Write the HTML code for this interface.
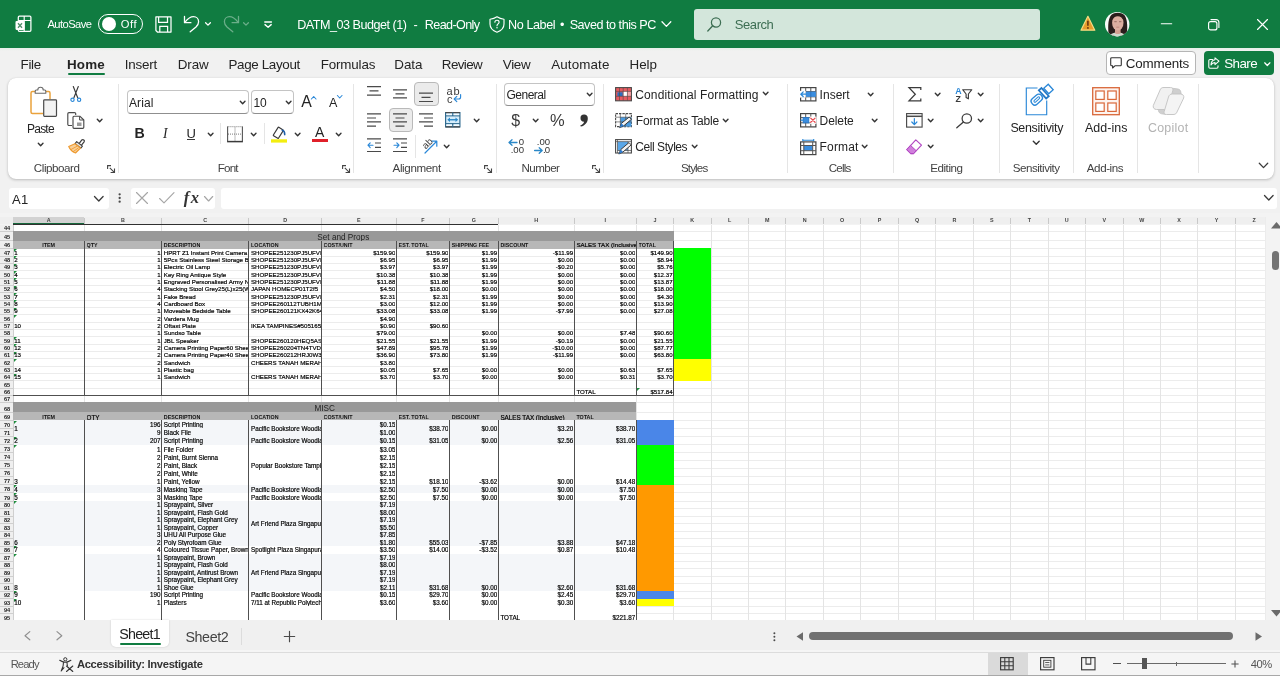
<!DOCTYPE html>
<html lang="en">
<head>
<meta charset="utf-8">
<title>DATM_03 Budget (1) - Excel</title>
<style>
*{box-sizing:border-box;margin:0;padding:0}
html,body{width:1280px;height:676px;overflow:hidden;background:#f1f1f1;font-family:"Liberation Sans",sans-serif;color:#242424}
.abs,.abs *{position:absolute}
.t{position:absolute;white-space:nowrap;line-height:1}
svg{position:absolute;overflow:visible}
.L{position:absolute;left:0;top:0;width:100%;height:100%;will-change:transform}
/* title bar */
#title{left:0;top:0;width:1280px;height:48px;background:#107c41;color:#fff}
#title .t{font-size:12.5px}
/* tab row */
#tabs{left:0;top:48px;width:1280px;height:30px;background:linear-gradient(#e6f0e9 0,#f1f1f1 3px)}
#tabs .t{font-size:14px;top:9px;color:#242424}
/* ribbon */
#ribbon{left:8px;top:78px;width:1265.5px;height:101px}
#rcard{position:absolute;left:0;top:.4px;width:1265.5px;height:100.4px;background:#fff;border-radius:8px;box-shadow:0 1px 3px rgba(0,0,0,.22),0 0 1px rgba(0,0,0,.14)}
#ribbon .t{font-size:13px;color:#242424}
#ribbon .g{font-size:12px;color:#444;top:84px}
.sep{width:1px;background:#e1e1e1;top:6px;height:86px}
/* formula bar */
#fbar{left:0;top:182px;width:1280px;height:31px}
.fbox{background:#fff;border-radius:4px;top:5px;height:22px}
/* grid */
#grid{left:0;top:213px;width:1280px;height:407px;background:#fff;overflow:hidden}
/* bottom */
#sheetbar{left:0;top:620px;width:1280px;height:31px;background:#f0f0f0}
#status{left:0;top:650px;width:1280px;height:26px;background:#f5f5f5}
#status:before{content:'';position:absolute;left:0;top:1.5px;width:1280px;height:1.4px;background:#dcdcdc}

#grid div{position:absolute}
#grid .ch{top:4.1px;height:7px;line-height:7px;font-size:5.4px;text-align:center;color:#444;font-weight:bold}
#grid .rh{left:0;width:12.5px;height:6px;line-height:6px;font-size:5.6px;text-align:right;color:#1a1a1a;padding-right:2.4px;font-weight:bold;letter-spacing:-0.1px}
#grid .c{font-size:6.15px;white-space:nowrap;overflow:hidden;color:#000;-webkit-text-stroke:.18px #000}
#grid .t2 .c{font-size:6.3px}
#grid .h{font-size:5.35px;font-weight:bold;white-space:nowrap;overflow:hidden;color:#111}
#grid .ti{font-size:8.2px;padding-top:1.5px;white-space:nowrap;overflow:hidden;color:#222}
#grid .tri{width:0;height:0;border-top:3px solid #1e8e3e;border-right:3px solid transparent}
</style>
</head>
<body>
<div id="title" class="abs">
<div class="L">
<svg style="left:14.80px;top:14.70px;" width="17" height="17" viewBox="0 0 17 17"><path d="M3.300 6V2.200a1.100 1.100 0 0 1 1.100-1.100h10.400a1.100 1.100 0 0 1 1.100 1.100v13a1.100 1.100 0 0 1-1.100 1.100H4.400a1.100 1.100 0 0 1-1.100-1.100V14.500" fill="none" stroke="#fff" stroke-width="1.250"/><path d="M9.200 1.100v15M3.300 5.500h12.600" stroke="#fff" stroke-width="1.150" fill="none"/><rect x="0.500" y="5.900" width="9" height="9" rx="1.100" fill="#fff"/><path d="M3 8.200l4 4.500M7 8.200l-4 4.500" stroke="#4f8f6a" stroke-width="1.300" fill="none"/></svg>
<div class="t" style="left:47.44px;top:19px;font-size:11.2px;letter-spacing:-0.578px;color:#fff;">AutoSave</div>
<div style="left:98.2px;top:14px;width:45px;height:20px;border:1.3px solid #fff;border-radius:10px"></div>
<div style="left:101.7px;top:17px;width:14.2px;height:14.2px;border-radius:50%;background:#fff"></div>
<div class="t" style="left:120.74px;top:19px;font-size:11.2px;letter-spacing:0.544px;color:#fff;">Off</div>
<svg style="left:154.50px;top:15.80px;" width="17" height="17" viewBox="0 0 17 17"><path d="M0.900 0.900H16V16H2.400L0.900 14.500z" fill="none" stroke="#fff" stroke-width="1.250" stroke-linejoin="round"/><path d="M3.600 0.900V6.300h8.900V0.900M4.800 16v-5.600h7.800V16" fill="none" stroke="#fff" stroke-width="1.250"/></svg>
<svg style="left:183.00px;top:16.00px;" width="17" height="17" viewBox="0 0 17 17"><path d="M1.500 0.500v6.200h6.400" fill="none" stroke="#fff" stroke-width="1.300" stroke-linecap="round" stroke-linejoin="round"/><path d="M1.800 6.300C4.300 3.300 7.200 0.700 10.500 0.700c3 0 5.100 2.100 5.100 5c0 2.300-1.100 3.800-2.600 5.200L7.200 15.800" fill="none" stroke="#fff" stroke-width="1.300" stroke-linecap="round"/></svg>
<svg style="left:204.90px;top:21.90px;" width="6" height="4" viewBox="0 0 6 4"><path d="M0.600 0.700L3 3.100L5.400 0.700" fill="none" stroke="#fff" stroke-width="1.300" stroke-linecap="round" stroke-linejoin="round"/></svg>
<svg style="left:222.50px;top:16.00px;opacity:.38;" width="17" height="17" viewBox="0 0 17 17"><path d="M15.500 0.500v6.200h-6.400" fill="none" stroke="#fff" stroke-width="1.300" stroke-linecap="round" stroke-linejoin="round"/><path d="M15.200 6.300C12.700 3.300 9.800 0.700 6.500 0.700c-3 0-5.100 2.100-5.100 5c0 2.300 1.100 3.800 2.600 5.200L9.800 15.800" fill="none" stroke="#fff" stroke-width="1.300" stroke-linecap="round"/></svg>
<svg style="left:243.00px;top:21.90px;opacity:.38;" width="6" height="4" viewBox="0 0 6 4"><path d="M0.600 0.700L3 3.100L5.400 0.700" fill="none" stroke="#fff" stroke-width="1.300" stroke-linecap="round" stroke-linejoin="round"/></svg>
<svg style="left:264.00px;top:20.80px;" width="9" height="8" viewBox="0 0 9 8"><path d="M0.800 1h6.600" stroke="#fff" stroke-width="1.400" stroke-linecap="round"/><path d="M1 3.600L4.100 6.200L7.200 3.600" fill="none" stroke="#fff" stroke-width="1.400" stroke-linecap="round" stroke-linejoin="round"/></svg>
<div class="t" style="left:297.17px;top:19px;font-size:12.6px;letter-spacing:-0.480px;color:#fff;">DATM_03 Budget (1)</div>
<div class="t" style="left:413.55px;top:19px;font-size:12.6px;color:#fff;">-</div>
<div class="t" style="left:424.87px;top:19px;font-size:12.6px;letter-spacing:-0.621px;color:#fff;">Read-Only</div>
<svg style="left:488.50px;top:16.00px;" width="16" height="17" viewBox="0 0 16 17"><path d="M8 0.800C6 2.200 3.500 3 1 3.200V8c0 4 3 6.800 7 8.200c4-1.400 7-4.200 7-8.200V3.200C12.500 3 10 2.200 8 0.800z" fill="none" stroke="#fff" stroke-width="1.150" stroke-linejoin="round"/><path d="M5.900 6.300c0-1.300 0.900-2 2.100-2s2.100 0.700 2.100 1.900c0 1.700-2.100 1.700-2.100 3.500" fill="none" stroke="#fff" stroke-width="1.100" stroke-linecap="round"/><circle cx="8" cy="11.800" r="0.750" fill="#fff"/></svg>
<div class="t" style="left:507.97px;top:19px;font-size:12.6px;letter-spacing:-0.397px;color:#fff;">No Label</div>
<div class="t" style="left:559.99px;top:19px;font-size:12.6px;color:#fff;">•</div>
<div class="t" style="left:569.67px;top:19px;font-size:12.6px;letter-spacing:-0.473px;color:#fff;">Saved to this PC</div>
<svg style="left:661.00px;top:21.20px;" width="12" height="7" viewBox="0 0 12 7"><path d="M1 0.800L5.400 5.400L9.800 0.800" fill="none" stroke="#fff" stroke-width="1.300" stroke-linecap="round" stroke-linejoin="round"/></svg>
<div style="left:693.6px;top:8.5px;width:346.6px;height:31px;background:#d3e6db;border-radius:3px"></div>
<svg style="left:707.00px;top:16.50px;" width="14.5" height="15" viewBox="0 0 14.5 15"><circle cx="9" cy="5.500" r="4.600" fill="none" stroke="#3d6e53" stroke-width="1.250"/><path d="M5.700 8.800L0.800 14" stroke="#3d6e53" stroke-width="1.300" stroke-linecap="round"/></svg>
<div class="t" style="left:734.75px;top:18px;font-size:13px;letter-spacing:-0.418px;color:#3d6e53;">Search</div>
<svg style="left:1079.50px;top:15.00px;" width="16" height="16.5" viewBox="0 0 16 16.5"><path d="M7.900 1.300L14.800 15.200H1z" fill="#e79d2b" stroke="#f5dc84" stroke-width="1.200" stroke-linejoin="round"/><path d="M7.900 5.800v5" stroke="#6b3410" stroke-width="1.600"/><circle cx="7.900" cy="12.900" r="0.950" fill="#6b3410"/></svg>
<svg style="left:1105.00px;top:11.70px;" width="25" height="25" viewBox="0 0 25 25"><defs><clipPath id="av"><circle cx="12.200" cy="12.200" r="12.200"/></clipPath></defs><circle cx="12.200" cy="12.200" r="12.200" fill="#f6faf7"/><g clip-path="url(#av)"><path d="M3.600 21.500C2.600 13 3.500 6 6.500 2.800C9 0 16.500 0 19 2.800c3 3.200 3.900 10.200 2.900 18.700L17 24H8z" fill="#2a1d1b"/><path d="M4 25c0.800-3 3.800-4.500 8.600-4.500s7.800 1.500 8.600 4.500z" fill="#cfd9cd"/><path d="M10 16h5.600v5.200c-1.800 1.200-3.800 1.200-5.600 0z" fill="#d3a091"/><ellipse cx="12.800" cy="10.800" rx="5.700" ry="7.800" fill="#dcaea0"/><path d="M7 8.300C7.300 4.600 9.500 2.600 12.800 2.600s5.500 2 5.800 5.700C17 5.700 15.500 4.300 12.800 4.300S8.600 5.700 7 8.300z" fill="#2a1d1b"/><path d="M9.300 9.700h2.400M14 9.700h2.400" stroke="#7a5248" stroke-width="0.700"/><path d="M11.300 15.200h3" stroke="#b87a70" stroke-width="0.700"/></g></svg>
<svg style="left:1160.50px;top:22.80px;" width="11" height="2" viewBox="0 0 11 2"><path d="M0.300 0.700h10.400" stroke="#fff" stroke-width="1.150" stroke-linecap="round"/></svg>
<svg style="left:1208.00px;top:18.50px;" width="12" height="12" viewBox="0 0 12 12"><rect x="0.600" y="2.600" width="8.300" height="8.300" rx="2" fill="none" stroke="#fff" stroke-width="1.150"/><path d="M3 0.600h5.200a2.700 2.700 0 0 1 2.700 2.700v5.200" fill="none" stroke="#fff" stroke-width="1.150" stroke-linecap="round"/></svg>
<svg style="left:1256.50px;top:18.80px;" width="11" height="11" viewBox="0 0 11 11"><path d="M0.500 0.500l10 10M10.500 0.500l-10 10" stroke="#fff" stroke-width="1.150" stroke-linecap="round"/></svg>
</div>
</div>
<div id="tabs" class="abs">
<div class="L">
<div class="t" style="left:20.53px;top:10px;font-size:13.4px;letter-spacing:-0.284px;">File</div>
<div class="t" style="left:67.03px;top:10px;font-size:13.4px;letter-spacing:0.170px;font-weight:bold;">Home</div>
<div class="t" style="left:124.73px;top:10px;font-size:13.4px;letter-spacing:-0.175px;">Insert</div>
<div class="t" style="left:177.83px;top:10px;font-size:13.4px;letter-spacing:-0.143px;">Draw</div>
<div class="t" style="left:228.53px;top:10px;font-size:13.4px;letter-spacing:-0.351px;">Page Layout</div>
<div class="t" style="left:320.73px;top:10px;font-size:13.4px;letter-spacing:-0.158px;">Formulas</div>
<div class="t" style="left:394.33px;top:10px;font-size:13.4px;letter-spacing:-0.088px;">Data</div>
<div class="t" style="left:441.83px;top:10px;font-size:13.4px;letter-spacing:-0.619px;">Review</div>
<div class="t" style="left:502.73px;top:10px;font-size:13.4px;letter-spacing:-0.255px;">View</div>
<div class="t" style="left:551.13px;top:10px;font-size:13.4px;letter-spacing:0.140px;">Automate</div>
<div class="t" style="left:629.53px;top:10px;font-size:13.4px;letter-spacing:-0.040px;">Help</div>
<div style="left:67.70px;top:25.10px;width:37.70px;height:1.90px;background:#107c41;border-radius:1px"></div>
<div style="left:1105.60px;top:3.20px;width:90.10px;height:23.40px;background:#fff;border:1px solid #b5b5b5;border-radius:4px"></div>
<svg style="left:1110.00px;top:9.30px;" width="12" height="12" viewBox="0 0 12 12"><path d="M1.700 0.700h8.600a1 1 0 0 1 1 1v6a1 1 0 0 1-1 1H5.200L2.600 11V8.700H1.700a1 1 0 0 1-1-1v-6a1 1 0 0 1 1-1z" fill="none" stroke="#333" stroke-width="1.100" stroke-linejoin="round"/></svg>
<div class="t" style="left:1125.73px;top:9px;font-size:13.4px;letter-spacing:-0.163px;">Comments</div>
<div style="left:1203.50px;top:3.20px;width:70.70px;height:23.80px;background:#107c41;border-radius:4px"></div>
<svg style="left:1208.00px;top:9.00px;" width="12" height="12" viewBox="0 0 12 12"><path d="M4.500 2.500H2a1.200 1.200 0 0 0-1.200 1.200V10a1.200 1.200 0 0 0 1.200 1.200h6.800A1.200 1.200 0 0 0 10 10V8.800" fill="none" stroke="#fff" stroke-width="1.100" stroke-linecap="round"/><path d="M7 0.800L11 4.200L7 7.600V5.600C5 5.600 3.800 6.300 3 8c0-3 1.500-4.800 4-5.200z" fill="none" stroke="#fff" stroke-width="1.050" stroke-linejoin="round"/></svg>
<div class="t" style="left:1224.13px;top:9px;font-size:13.4px;letter-spacing:-0.555px;color:#fff;">Share</div>
<svg style="left:1263.50px;top:13.50px;" width="7" height="5" viewBox="0 0 7 5"><path d="M0.700 0.800L3.300 3.500L5.900 0.800" fill="none" stroke="#fff" stroke-width="1.250" stroke-linecap="round" stroke-linejoin="round"/></svg>
</div>
</div>
<div id="ribbon" class="abs"><div id="rcard"></div>
<div class="L">
<svg style="left:22.00px;top:8.00px;" width="28" height="32" viewBox="0 0 28 32"><path d="M6.500 5.500H2.500a1.500 1.500 0 0 0-1.500 1.500V26a1.500 1.500 0 0 0 1.500 1.500H13" fill="none" stroke="#eaa23c" stroke-width="1.500"/><path d="M15 5.500h3.500A1.500 1.500 0 0 1 20 7v6" fill="none" stroke="#eaa23c" stroke-width="1.500"/><path d="M5.200 7.200V5a1 1 0 0 1 1-1h1.600a2.700 2.700 0 0 1 5.400 0h1.600a1 1 0 0 1 1 1v2.200z" fill="#fff" stroke="#6a6a6a" stroke-width="1.100" stroke-linejoin="round"/><rect x="13.700" y="13.800" width="12.800" height="16.600" rx="0.800" fill="#f3f3f3" stroke="#4a4a4a" stroke-width="1.200"/></svg>
<div class="t" style="left:19.00px;top:45px;font-size:12px;letter-spacing:-0.772px;">Paste</div>
<svg style="left:29.95px;top:64.75px;" width="5.3" height="3.1" viewBox="0 0 5.3 3.1"><path d="M0.300 0.300L2.65 2.70L5.00 0.300" fill="none" stroke="#333" stroke-width="1.4" stroke-linecap="round" stroke-linejoin="round"/></svg>
<svg style="left:62.00px;top:8.00px;" width="12" height="16.5" viewBox="0 0 12 16.5"><path d="M3.300 0.500L7.700 11.700M8.300 0.500L3.900 11.700" stroke="#3b3b3b" stroke-width="1.150" stroke-linecap="round" fill="none"/><circle cx="2.500" cy="13.800" r="1.650" fill="#fff" stroke="#2b88d8" stroke-width="1.150"/><circle cx="9.100" cy="13.800" r="1.650" fill="#fff" stroke="#2b88d8" stroke-width="1.150"/></svg>
<svg style="left:59.00px;top:34.00px;" width="18" height="17" viewBox="0 0 18 17"><path d="M5 13.500H2a1.200 1.200 0 0 1-1.200-1.200V1.800A1.200 1.200 0 0 1 2 0.600h5.500a1.200 1.200 0 0 1 1.200 1.200V3" fill="none" stroke="#4a4a4a" stroke-width="1.150"/><path d="M7 4.200h5.800L16.800 8v7.300a1 1 0 0 1-1 1H7a1 1 0 0 1-1-1V5.200a1 1 0 0 1 1-1z" fill="#fff" stroke="#4a4a4a" stroke-width="1.150" stroke-linejoin="round"/><path d="M12.600 4.400V8h4" fill="none" stroke="#4a4a4a" stroke-width="1"/><rect x="10" y="10.500" width="4.500" height="3.500" fill="#9a9a9a"/></svg>
<svg style="left:88.75px;top:41.15px;" width="5.3" height="3.1" viewBox="0 0 5.3 3.1"><path d="M0.300 0.300L2.65 2.70L5.00 0.300" fill="none" stroke="#333" stroke-width="1.4" stroke-linecap="round" stroke-linejoin="round"/></svg>
<svg style="left:59.50px;top:60.00px;" width="17" height="16" viewBox="0 0 17 16"><path d="M11.300 5.300l2.500-3.300a1.500 1.500 0 0 1 2.300 1.900l-2.600 3.200" fill="#fff" stroke="#3b3b3b" stroke-width="1.200"/><path d="M8.700 3.600l5.700 4.500-1.600 2-5.700-4.500z" fill="#e8e8e8" stroke="#3b3b3b" stroke-width="1.100" stroke-linejoin="round"/><path d="M7 5.800L0.700 8.500c1.300 3 3.600 5.300 6.800 6.500L12.500 10z" fill="#f8cf98" stroke="#ee9a2f" stroke-width="1.100" stroke-linejoin="round"/><path d="M3 11.500L9.500 8M5 13.800l5.500-4" stroke="#ee9a2f" stroke-width="0.900" fill="none"/></svg>
<div class="t" style="left:25.82px;top:84px;font-size:11.6px;letter-spacing:-0.437px;color:#424242;">Clipboard</div>
<svg style="left:99.00px;top:87.00px;" width="8.5" height="8" viewBox="0 0 8.5 8"><path d="M0.600 4V0.600H4" fill="none" stroke="#444" stroke-width="1.100"/><path d="M2.800 2.800L7.300 7.300M7.500 3.600V7.500H3.600" fill="none" stroke="#444" stroke-width="1.100"/></svg>
<div style="left:110.10px;top:6.00px;width:1.00px;height:88.50px;background:#e5e5e5"></div>
<div style="left:119.00px;top:12.00px;width:121.70px;height:24.40px;background:#fff;border:1px solid #c4c4c4;border-bottom-color:#8f8f8f;border-radius:4px"></div>
<div class="t" style="left:121.00px;top:19px;font-size:12px;letter-spacing:0.073px;">Arial</div>
<svg style="left:232.05px;top:23.35px;" width="5.3" height="3.1" viewBox="0 0 5.3 3.1"><path d="M0.300 0.300L2.65 2.70L5.00 0.300" fill="none" stroke="#333" stroke-width="1.4" stroke-linecap="round" stroke-linejoin="round"/></svg>
<div style="left:242.60px;top:12.00px;width:43.10px;height:24.40px;background:#fff;border:1px solid #c4c4c4;border-bottom-color:#8f8f8f;border-radius:4px"></div>
<div class="t" style="left:245.40px;top:19px;font-size:12px;letter-spacing:-0.148px;">10</div>
<svg style="left:277.55px;top:23.35px;" width="5.3" height="3.1" viewBox="0 0 5.3 3.1"><path d="M0.300 0.300L2.65 2.70L5.00 0.300" fill="none" stroke="#333" stroke-width="1.4" stroke-linecap="round" stroke-linejoin="round"/></svg>
<div class="t" style="left:293.33px;top:16px;font-size:15.8px;">A</div>
<svg style="left:302.80px;top:17.50px;" width="5.5" height="3.5" viewBox="0 0 5.5 3.5"><path d="M0.400 3L2.700 0.500L5 3" fill="none" stroke="#2b88d8" stroke-width="1.100" stroke-linecap="round" stroke-linejoin="round"/></svg>
<div class="t" style="left:321.00px;top:19px;font-size:12.6px;">A</div>
<svg style="left:329.20px;top:17.30px;" width="5.5" height="3.5" viewBox="0 0 5.5 3.5"><path d="M0.400 0.500L2.700 3L5 0.500" fill="none" stroke="#2b88d8" stroke-width="1.100" stroke-linecap="round" stroke-linejoin="round"/></svg>
<div class="t" style="left:126.52px;top:48px;font-size:14.2px;font-weight:bold;">B</div>
<div class="t" style="left:155.09px;top:49px;font-size:13.6px;font-style:italic;font-family:'Liberation Serif',serif;">I</div>
<div class="t" style="left:178.46px;top:49px;font-size:13px;">U</div>
<div style="left:179.00px;top:61.30px;width:8.30px;height:1.10px;background:#3b3b3b"></div>
<svg style="left:199.75px;top:55.35px;" width="5.3" height="3.1" viewBox="0 0 5.3 3.1"><path d="M0.300 0.300L2.65 2.70L5.00 0.300" fill="none" stroke="#333" stroke-width="1.4" stroke-linecap="round" stroke-linejoin="round"/></svg>
<div style="left:212.10px;top:45.00px;width:1.00px;height:21.40px;background:#e5e5e5"></div>
<svg style="left:219.00px;top:47.50px;" width="16" height="16.5" viewBox="0 0 16 16.5"><path d="M0.600 0.700h14.800M8 1.500v13.500M1 8.100h14" fill="none" stroke="#7a7a7a" stroke-width="1" stroke-dasharray="1 1"/><path d="M0.600 0.500v15M15.400 0.500v15" stroke="#555" stroke-width="1.100"/><path d="M0.100 15.600h15.800" stroke="#3b3b3b" stroke-width="1.500"/></svg>
<svg style="left:243.15px;top:55.35px;" width="5.3" height="3.1" viewBox="0 0 5.3 3.1"><path d="M0.300 0.300L2.65 2.70L5.00 0.300" fill="none" stroke="#333" stroke-width="1.4" stroke-linecap="round" stroke-linejoin="round"/></svg>
<div style="left:256.10px;top:45.00px;width:1.00px;height:21.40px;background:#e5e5e5"></div>
<svg style="left:262.80px;top:47.50px;" width="16" height="17" viewBox="0 0 16 17"><g transform="rotate(32 7.300 6.800)"><rect x="4.300" y="1.800" width="6" height="10" rx="0.500" fill="#fff" stroke="#3b3b3b" stroke-width="1.200"/></g><path d="M11.300 4.200C13 4.600 13.800 6.200 13.700 8.600" fill="none" stroke="#1f5fa8" stroke-width="1.600" stroke-linecap="round"/><rect x="0" y="13.300" width="16" height="3.300" fill="#f3ee10"/></svg>
<svg style="left:286.75px;top:55.35px;" width="5.3" height="3.1" viewBox="0 0 5.3 3.1"><path d="M0.300 0.300L2.65 2.70L5.00 0.300" fill="none" stroke="#333" stroke-width="1.4" stroke-linecap="round" stroke-linejoin="round"/></svg>
<div class="t" style="left:306.93px;top:47px;font-size:14px;">A</div>
<div style="left:303.50px;top:60.80px;width:16.10px;height:3.20px;background:#e0202a"></div>
<svg style="left:327.65px;top:55.35px;" width="5.3" height="3.1" viewBox="0 0 5.3 3.1"><path d="M0.300 0.300L2.65 2.70L5.00 0.300" fill="none" stroke="#333" stroke-width="1.4" stroke-linecap="round" stroke-linejoin="round"/></svg>
<div class="t" style="left:209.72px;top:84px;font-size:11.6px;letter-spacing:-0.784px;color:#424242;">Font</div>
<svg style="left:334.00px;top:87.00px;" width="8.5" height="8" viewBox="0 0 8.5 8"><path d="M0.600 4V0.600H4" fill="none" stroke="#444" stroke-width="1.100"/><path d="M2.800 2.800L7.300 7.300M7.500 3.600V7.500H3.600" fill="none" stroke="#444" stroke-width="1.100"/></svg>
<div style="left:345.40px;top:6.00px;width:1.00px;height:88.50px;background:#e5e5e5"></div>
<svg style="left:359.20px;top:6.00px;" width="14" height="14" viewBox="0 0 14 14"><path d="M0.0 2.7H14.0M2.5 6.9H11.5M0.0 11.1H14.0" stroke="#4a4a4a" stroke-width="1.200" fill="none"/></svg>
<svg style="left:385.20px;top:6.00px;" width="14" height="16" viewBox="0 0 14 16"><path d="M0.0 5.8H14.0M2.5 9.8H11.5M0.0 13.9H14.0" stroke="#4a4a4a" stroke-width="1.200" fill="none"/></svg>
<div style="left:406.40px;top:4.40px;width:24.40px;height:23.60px;background:#ebebeb;border:1px solid #b9b9b9;border-radius:4px"></div>
<svg style="left:411.40px;top:6.00px;" width="14" height="20" viewBox="0 0 14 20"><path d="M0.0 9.2H14.0M2.5 13.4H11.5M0.0 17.5H14.0" stroke="#4a4a4a" stroke-width="1.200" fill="none"/></svg>
<div class="t" style="left:438.45px;top:8px;font-size:11px;letter-spacing:1.064px;color:#3b3b3b;">ab</div>
<div class="t" style="left:438.95px;top:16px;font-size:11px;color:#3b3b3b;">c</div>
<svg style="left:445.00px;top:15.80px;" width="9" height="8.5" viewBox="0 0 9 8.5"><path d="M7.600 0.500v2.500a2 2 0 0 1-2 2H1.500" fill="none" stroke="#2b88d8" stroke-width="1.150" stroke-linecap="round"/><path d="M3.800 2.300L1.200 5l2.600 2.700" fill="none" stroke="#2b88d8" stroke-width="1.150" stroke-linecap="round" stroke-linejoin="round"/></svg>
<svg style="left:359.20px;top:34.00px;" width="14" height="16" viewBox="0 0 14 16"><path d="M0.0 1.9H14.0M0.0 6.0H9.0M0.0 9.9H14.0M0.0 14.2H9.0" stroke="#4a4a4a" stroke-width="1.200" fill="none"/></svg>
<div style="left:380.50px;top:30.20px;width:24.40px;height:24.10px;background:#ebebeb;border:1px solid #b9b9b9;border-radius:4px"></div>
<svg style="left:385.20px;top:34.00px;" width="14" height="16" viewBox="0 0 14 16"><path d="M0.0 1.9H14.0M2.5 6.0H11.5M0.0 9.9H14.0M2.5 14.2H11.5" stroke="#4a4a4a" stroke-width="1.200" fill="none"/></svg>
<svg style="left:411.40px;top:34.00px;" width="14" height="16" viewBox="0 0 14 16"><path d="M0.0 1.9H14.0M5.0 6.0H14.0M0.0 9.9H14.0M5.0 14.2H14.0" stroke="#4a4a4a" stroke-width="1.200" fill="none"/></svg>
<svg style="left:436.80px;top:34.30px;" width="15.5" height="15.5" viewBox="0 0 15.5 15.5"><rect x="0.600" y="0.600" width="14.300" height="14.300" fill="#d6edfb" stroke="#2f6a8f" stroke-width="1.200"/><path d="M0.600 0.600h14.300M0.600 14.900h14.300" stroke="#4a4a4a" stroke-width="1.200"/><path d="M0.600 3.900h14.300M0.600 11.600h14.300M7.750 0.600V3.900M7.750 11.600V14.900" stroke="#2f6a8f" stroke-width="1" fill="none"/><path d="M1.300 2.250h13M1.300 13.250h13" stroke="#fff" stroke-width="1.100"/><path d="M7.750 0.600V3.900M7.750 11.600V14.900" stroke="#2f6a8f" stroke-width="1" fill="none"/><path d="M4 7.750h7.500" stroke="#2b88c8" stroke-width="1.400"/><path d="M5 5.400L2.300 7.750L5 10.100zM10.500 5.400L13.200 7.750L10.500 10.100z" fill="#2b88c8"/></svg>
<svg style="left:465.75px;top:41.25px;" width="5.3" height="3.1" viewBox="0 0 5.3 3.1"><path d="M0.300 0.300L2.65 2.70L5.00 0.300" fill="none" stroke="#333" stroke-width="1.4" stroke-linecap="round" stroke-linejoin="round"/></svg>
<svg style="left:359.20px;top:60.40px;" width="14" height="15" viewBox="0 0 14 15"><path d="M0.0 0.8H14.0M8.0 5.0H14.0M8.0 9.3H14.0M0.0 13.5H14.0" stroke="#4a4a4a" stroke-width="1.200" fill="none"/><path d="M6 7.200H1M3.200 4.800L1 7.200L3.200 9.600" fill="none" stroke="#2b88d8" stroke-width="1.150" stroke-linecap="round" stroke-linejoin="round"/></svg>
<svg style="left:385.20px;top:60.40px;" width="14" height="15" viewBox="0 0 14 15"><path d="M0.0 0.8H14.0M8.0 5.0H14.0M8.0 9.3H14.0M0.0 13.5H14.0" stroke="#4a4a4a" stroke-width="1.200" fill="none"/><path d="M1 7.200h5M3.800 4.800L6 7.200L3.800 9.600" fill="none" stroke="#2b88d8" stroke-width="1.150" stroke-linecap="round" stroke-linejoin="round"/></svg>
<div style="left:406.50px;top:57.00px;width:1.00px;height:22.50px;background:#e5e5e5"></div>
<svg style="left:413.00px;top:60.00px;" width="17.5" height="16" viewBox="0 0 17.5 16"><path d="M4 15L15.500 3.500M10.800 3.200h5v5" fill="none" stroke="#2b88d8" stroke-width="1.200" stroke-linecap="round" stroke-linejoin="round"/></svg>
<div class="t" style="left:413.5px;top:59.5px;font-size:9.6px;color:#3b3b3b;transform:rotate(-45deg);transform-origin:0 100%;margin-top:3px;margin-left:5px">ab</div>
<svg style="left:435.55px;top:67.35px;" width="5.3" height="3.1" viewBox="0 0 5.3 3.1"><path d="M0.300 0.300L2.65 2.70L5.00 0.300" fill="none" stroke="#333" stroke-width="1.4" stroke-linecap="round" stroke-linejoin="round"/></svg>
<div class="t" style="left:384.52px;top:84px;font-size:11.6px;letter-spacing:-0.366px;color:#424242;">Alignment</div>
<svg style="left:476.00px;top:87.00px;" width="8.5" height="8" viewBox="0 0 8.5 8"><path d="M0.600 4V0.600H4" fill="none" stroke="#444" stroke-width="1.100"/><path d="M2.800 2.800L7.300 7.300M7.500 3.600V7.500H3.600" fill="none" stroke="#444" stroke-width="1.100"/></svg>
<div style="left:487.80px;top:6.00px;width:1.00px;height:88.50px;background:#e5e5e5"></div>
<div style="left:496.40px;top:4.60px;width:90.90px;height:23.50px;background:#fff;border:1px solid #c4c4c4;border-bottom-color:#8f8f8f;border-radius:4px"></div>
<div class="t" style="left:498.40px;top:11px;font-size:12px;letter-spacing:-0.482px;">General</div>
<svg style="left:578.55px;top:15.35px;" width="5.3" height="3.1" viewBox="0 0 5.3 3.1"><path d="M0.300 0.300L2.65 2.70L5.00 0.300" fill="none" stroke="#333" stroke-width="1.4" stroke-linecap="round" stroke-linejoin="round"/></svg>
<div class="t" style="left:503.25px;top:35px;font-size:16px;color:#3b3b3b;">$</div>
<svg style="left:524.55px;top:41.25px;" width="5.3" height="3.1" viewBox="0 0 5.3 3.1"><path d="M0.300 0.300L2.65 2.70L5.00 0.300" fill="none" stroke="#333" stroke-width="1.4" stroke-linecap="round" stroke-linejoin="round"/></svg>
<div class="t" style="left:542.06px;top:34px;font-size:16.5px;color:#3b3b3b;">%</div>
<svg style="left:571.30px;top:36.20px;" width="9.5" height="13.5" viewBox="0 0 9.5 13.5"><path d="M5 0.500a3.600 3.600 0 0 1 3.800 3.900c0 3.900-2.600 7-7 8.200l-0.600-1.100c2.500-0.900 3.700-2.300 3.900-3.900a3.200 3.200 0 0 1-3.600-3.500A3.500 3.500 0 0 1 5 0.500z" fill="#333"/></svg>
<div class="t" style="left:510.78px;top:59px;font-size:9.6px;color:#333;">0</div>
<div class="t" style="left:502.72px;top:67px;font-size:9.6px;letter-spacing:-0.043px;color:#333;">.00</div>
<svg style="left:500.40px;top:60.80px;" width="9.5" height="7" viewBox="0 0 9.5 7"><path d="M9 3.500H1.200M4 0.700L1 3.500l3 2.800" fill="none" stroke="#2b88c8" stroke-width="1.300" stroke-linecap="round" stroke-linejoin="round"/></svg>
<div class="t" style="left:528.72px;top:59px;font-size:9.6px;letter-spacing:0.057px;color:#333;">.00</div>
<div class="t" style="left:535.12px;top:67px;font-size:9.6px;letter-spacing:-0.946px;color:#333;">.0</div>
<svg style="left:526.30px;top:68.70px;" width="9" height="7" viewBox="0 0 9 7"><path d="M0.600 3.500h7.400M5.200 0.700L8.200 3.500l-3 2.800" fill="none" stroke="#2b88c8" stroke-width="1.300" stroke-linecap="round" stroke-linejoin="round"/></svg>
<div class="t" style="left:513.42px;top:84px;font-size:11.6px;letter-spacing:-0.540px;color:#424242;">Number</div>
<svg style="left:583.50px;top:87.00px;" width="8.5" height="8" viewBox="0 0 8.5 8"><path d="M0.600 4V0.600H4" fill="none" stroke="#444" stroke-width="1.100"/><path d="M2.800 2.800L7.300 7.300M7.500 3.600V7.500H3.600" fill="none" stroke="#444" stroke-width="1.100"/></svg>
<div style="left:595.10px;top:6.00px;width:1.00px;height:88.50px;background:#e5e5e5"></div>
<svg style="left:607.20px;top:9.20px;" width="17" height="14.5" viewBox="0 0 17 14.5"><rect x="0.600" y="0.600" width="15.800" height="13.200" fill="#ea5a60" stroke="#4a4a4a" stroke-width="1.100"/><rect x="8.200" y="4.400" width="4.200" height="4.800" fill="#fff"/><rect x="12.400" y="4.400" width="3.500" height="4.800" fill="#f2a3a6"/><rect x="2.400" y="5.300" width="5.300" height="3.900" fill="#2b6fc0"/><path d="M4.500 0.600v13.200M8.200 0.600v13.200M12.400 0.600v13.200M0.600 4.400h15.800M0.600 9.300h15.800" stroke="#5a4a4a" stroke-width="0.800" fill="none" opacity=".8"/></svg>
<div class="t" style="left:627.30px;top:11px;font-size:12px;letter-spacing:0.118px;">Conditional Formatting</div>
<svg style="left:754.65px;top:14.35px;" width="5.3" height="3.1" viewBox="0 0 5.3 3.1"><path d="M0.300 0.300L2.65 2.70L5.00 0.300" fill="none" stroke="#333" stroke-width="1.4" stroke-linecap="round" stroke-linejoin="round"/></svg>
<svg style="left:607.20px;top:35.40px;" width="17" height="15" viewBox="0 0 17 15"><rect x="0.600" y="0.600" width="15.800" height="13" fill="#fff" stroke="#4a4a4a" stroke-width="1.100" stroke-dasharray="2.400 1"/><rect x="5.300" y="4.200" width="11.100" height="9.400" fill="#4a9be0"/><path d="M5.300 0.600V13.600M10.700 0.600V13.600M0.600 4.200H16.400M0.600 8.900H16.400" stroke="#4a4a4a" stroke-width="0.800" fill="none" opacity=".8"/><path d="M4.600 14.600L6.500 10.300L14.200 4l2.200 2.300L8.800 12.800z" fill="#f3f3f3" stroke="#3b3b3b" stroke-width="1" stroke-linejoin="round"/><path d="M4.600 14.600L6.500 10.300L8.800 12.800z" fill="#2b7cd3"/></svg>
<div class="t" style="left:627.80px;top:37px;font-size:12px;letter-spacing:-0.166px;">Format as Table</div>
<svg style="left:714.65px;top:40.75px;" width="5.3" height="3.1" viewBox="0 0 5.3 3.1"><path d="M0.300 0.300L2.65 2.70L5.00 0.300" fill="none" stroke="#333" stroke-width="1.4" stroke-linecap="round" stroke-linejoin="round"/></svg>
<svg style="left:607.20px;top:61.30px;" width="17" height="15" viewBox="0 0 17 15"><rect x="0.600" y="0.600" width="15.800" height="13.400" fill="#fff" stroke="#4a4a4a" stroke-width="1.100"/><rect x="2.600" y="2.700" width="10.400" height="8.800" fill="#5aa7e8"/><path d="M0.600 2.600H16.400M2.500 0.600V14M13 2.600V14M2.500 11.500H16.400" stroke="#4a4a4a" stroke-width="0.800" fill="none" opacity=".85"/><path d="M3.800 15L5.800 10.500L14 3.600l2.200 2.300L8 13z" fill="#f3f3f3" stroke="#3b3b3b" stroke-width="1" stroke-linejoin="round"/><path d="M3.800 15L5.800 10.500L8 13z" fill="#2b7cd3"/></svg>
<div class="t" style="left:627.30px;top:63px;font-size:12px;letter-spacing:-0.438px;">Cell Styles</div>
<svg style="left:683.75px;top:66.85px;" width="5.3" height="3.1" viewBox="0 0 5.3 3.1"><path d="M0.300 0.300L2.65 2.70L5.00 0.300" fill="none" stroke="#333" stroke-width="1.4" stroke-linecap="round" stroke-linejoin="round"/></svg>
<div class="t" style="left:672.92px;top:84px;font-size:11.6px;letter-spacing:-0.846px;color:#424242;">Styles</div>
<div style="left:779.00px;top:6.00px;width:1.00px;height:88.50px;background:#e5e5e5"></div>
<svg style="left:791.60px;top:9.20px;" width="16.5" height="14.5" viewBox="0 0 16.5 14.5"><rect x="0.600" y="0.600" width="15.300" height="13.300" fill="#fff" stroke="#444" stroke-width="1.200"/><path d="M5.700 0.600v13.300M10.800 0.600v13.300M0.600 4.600h15.300M0.600 9.800h15.300" stroke="#555" stroke-width="1" fill="none"/><path d="M3.200 0v15M8.250 0v15M13.400 0v15" stroke="#fff" stroke-width="1.300" stroke-dasharray="1.300 3.700 4 1.200 4 5" fill="none" opacity=".0"/><rect x="5.700" y="4.600" width="10.200" height="5.200" fill="#3a8ee0"/><path d="M10.800 4.600v5.200" stroke="#2f6fb5" stroke-width="0.800"/><rect x="0" y="3.800" width="5.700" height="6.800" fill="#fff"/><path d="M6 7.200H0.900M3.200 4.900L0.800 7.200L3.200 9.500" fill="none" stroke="#2b88d8" stroke-width="1.250" stroke-linecap="round" stroke-linejoin="round"/></svg>
<div class="t" style="left:811.60px;top:11px;font-size:12px;letter-spacing:0.018px;">Insert</div>
<svg style="left:859.65px;top:14.95px;" width="5.3" height="3.1" viewBox="0 0 5.3 3.1"><path d="M0.300 0.300L2.65 2.70L5.00 0.300" fill="none" stroke="#333" stroke-width="1.4" stroke-linecap="round" stroke-linejoin="round"/></svg>
<svg style="left:791.60px;top:35.30px;" width="16.5" height="14.5" viewBox="0 0 16.5 14.5"><rect x="0.600" y="0.600" width="15.300" height="13.300" fill="#fff" stroke="#444" stroke-width="1.200"/><path d="M5.700 0.600v13.300M10.800 0.600v13.300M0.600 4.600h15.300M0.600 9.800h15.300" stroke="#555" stroke-width="1" fill="none"/><path d="M3.200 0v15M8.250 0v15M13.400 0v15" stroke="#fff" stroke-width="1.300" stroke-dasharray="1.300 3.700 4 1.200 4 5" fill="none" opacity=".0"/><rect x="3.200" y="4.600" width="5.600" height="5.200" fill="#3a8ee0" stroke="#2b78c8" stroke-width="1"/><rect x="9.800" y="3.600" width="6.700" height="7.200" fill="#fff"/><path d="M10.700 5.100l4.400 4.200M15.100 5.100l-4.400 4.200" stroke="#e8484d" stroke-width="1.250" stroke-linecap="round"/><path d="M0.600 7.200h2.600" stroke="#2b88d8" stroke-width="1.200"/></svg>
<div class="t" style="left:811.60px;top:37px;font-size:12px;letter-spacing:-0.098px;">Delete</div>
<svg style="left:863.75px;top:40.95px;" width="5.3" height="3.1" viewBox="0 0 5.3 3.1"><path d="M0.300 0.300L2.65 2.70L5.00 0.300" fill="none" stroke="#333" stroke-width="1.4" stroke-linecap="round" stroke-linejoin="round"/></svg>
<svg style="left:791.60px;top:60.70px;" width="16.5" height="16" viewBox="0 0 16.5 16"><path d="M2.800 1.300h10.900M2.800 0v2.600M13.700 0v2.600" stroke="#2b88d8" stroke-width="1.100" fill="none"/><g transform="translate(0,2.300)"><rect x="0.600" y="0.600" width="15.300" height="12.700" fill="#fff" stroke="#444" stroke-width="1.200"/><rect x="3.800" y="4.200" width="8.900" height="5.200" fill="#3a8ee0"/><path d="M3.800 0.600v12.700M12.700 0.600v12.700M0.600 4.200h15.300M0.600 9.400h15.300" stroke="#555" stroke-width="1" fill="none"/></g></svg>
<div class="t" style="left:811.60px;top:63px;font-size:12px;letter-spacing:0.139px;">Format</div>
<svg style="left:853.95px;top:66.65px;" width="5.3" height="3.1" viewBox="0 0 5.3 3.1"><path d="M0.300 0.300L2.65 2.70L5.00 0.300" fill="none" stroke="#333" stroke-width="1.4" stroke-linecap="round" stroke-linejoin="round"/></svg>
<div class="t" style="left:820.72px;top:84px;font-size:11.6px;letter-spacing:-0.781px;color:#424242;">Cells</div>
<div style="left:885.30px;top:6.00px;width:1.00px;height:88.50px;background:#e5e5e5"></div>
<svg style="left:899.90px;top:9.00px;" width="14" height="14.5" viewBox="0 0 14 14.5"><path d="M12.800 3V0.700H1L7.300 7.200L1 13.800h11.800V11.500" fill="none" stroke="#3b3b3b" stroke-width="1.250" stroke-linejoin="miter"/></svg>
<svg style="left:927.05px;top:14.95px;" width="5.3" height="3.1" viewBox="0 0 5.3 3.1"><path d="M0.300 0.300L2.65 2.70L5.00 0.300" fill="none" stroke="#333" stroke-width="1.4" stroke-linecap="round" stroke-linejoin="round"/></svg>
<div class="t" style="left:947.27px;top:9px;font-size:8.8px;font-weight:bold;color:#2b88d8;">A</div>
<div class="t" style="left:947.61px;top:17px;font-size:8.8px;font-weight:bold;color:#3b3b3b;">Z</div>
<svg style="left:953.80px;top:10.80px;" width="10.5" height="11" viewBox="0 0 10.5 11"><path d="M0.700 0.700h9.100L6.400 5v4.800L4.100 8.400V5z" fill="none" stroke="#3b3b3b" stroke-width="1.150" stroke-linejoin="round"/></svg>
<svg style="left:969.85px;top:14.95px;" width="5.3" height="3.1" viewBox="0 0 5.3 3.1"><path d="M0.300 0.300L2.65 2.70L5.00 0.300" fill="none" stroke="#333" stroke-width="1.4" stroke-linecap="round" stroke-linejoin="round"/></svg>
<svg style="left:897.80px;top:35.00px;" width="17" height="15" viewBox="0 0 17 15"><rect x="0.600" y="0.600" width="15.500" height="13.500" fill="#fff" stroke="#4a4a4a" stroke-width="1.150"/><path d="M0.600 3.300h15.500" stroke="#4a4a4a" stroke-width="1.500"/><path d="M8.350 5.500v6M5.800 9l2.550 2.600L10.900 9" fill="none" stroke="#2b88d8" stroke-width="1.200" stroke-linecap="round" stroke-linejoin="round"/></svg>
<svg style="left:920.45px;top:41.25px;" width="5.3" height="3.1" viewBox="0 0 5.3 3.1"><path d="M0.300 0.300L2.65 2.70L5.00 0.300" fill="none" stroke="#333" stroke-width="1.4" stroke-linecap="round" stroke-linejoin="round"/></svg>
<svg style="left:948.00px;top:34.60px;" width="16.5" height="15.5" viewBox="0 0 16.5 15.5"><circle cx="10.800" cy="5.500" r="4.700" fill="none" stroke="#3b3b3b" stroke-width="1.250"/><path d="M7.400 9L0.800 14.800" stroke="#3b3b3b" stroke-width="1.300" stroke-linecap="round"/></svg>
<svg style="left:969.85px;top:41.25px;" width="5.3" height="3.1" viewBox="0 0 5.3 3.1"><path d="M0.300 0.300L2.65 2.70L5.00 0.300" fill="none" stroke="#333" stroke-width="1.4" stroke-linecap="round" stroke-linejoin="round"/></svg>
<svg style="left:898.00px;top:61.00px;" width="16.5" height="15.5" viewBox="0 0 16.5 15.5"><path d="M9.800 0.800L15.500 6.200L7.500 14.600H4.800L0.800 10.600z" fill="#fff" stroke="#b146c2" stroke-width="1.150" stroke-linejoin="round"/><path d="M4.500 6.400L0.800 10.600L4.800 14.600H7.500L10.200 11.700z" fill="#d07fdc" stroke="#b146c2" stroke-width="1" stroke-linejoin="round"/></svg>
<svg style="left:920.45px;top:67.05px;" width="5.3" height="3.1" viewBox="0 0 5.3 3.1"><path d="M0.300 0.300L2.65 2.70L5.00 0.300" fill="none" stroke="#333" stroke-width="1.4" stroke-linecap="round" stroke-linejoin="round"/></svg>
<div class="t" style="left:922.22px;top:84px;font-size:11.6px;letter-spacing:-0.452px;color:#424242;">Editing</div>
<div style="left:990.90px;top:6.00px;width:1.00px;height:88.50px;background:#e5e5e5"></div>
<svg style="left:1017.00px;top:6.80px;" width="29" height="31" viewBox="0 0 29 31"><path d="M12.500 3H1.300V29.700H21.700V15.500" fill="none" stroke="#2b88d8" stroke-width="1.150"/><g transform="translate(16.500 10.300) rotate(-42)"><rect x="-12.500" y="-3.600" width="12.300" height="7.200" rx="3.200" fill="#fff" stroke="#2b88d8" stroke-width="1.300"/><rect x="-9.800" y="-1.100" width="7" height="2.200" rx="1.100" fill="none" stroke="#2b88d8" stroke-width="1"/><rect x="1.300" y="-5.500" width="3.600" height="11" fill="#fff" stroke="#2277c4" stroke-width="1.700"/><rect x="6.400" y="-3.700" width="6" height="7.400" fill="#fff" stroke="#2b88d8" stroke-width="1.300"/></g></svg>
<div class="t" style="left:1002.38px;top:44px;font-size:12.4px;letter-spacing:-0.268px;">Sensitivity</div>
<svg style="left:1025.15px;top:63.15px;" width="6.5" height="3.6" viewBox="0 0 6.5 3.6"><path d="M0.300 0.300L3.25 3.20L6.20 0.300" fill="none" stroke="#333" stroke-width="1.4" stroke-linecap="round" stroke-linejoin="round"/></svg>
<div class="t" style="left:1004.72px;top:84px;font-size:11.6px;letter-spacing:-0.476px;color:#424242;">Sensitivity</div>
<div style="left:1064.90px;top:6.00px;width:1.00px;height:88.50px;background:#e5e5e5"></div>
<svg style="left:1083.90px;top:8.70px;" width="28" height="28.5" viewBox="0 0 28 28.5"><rect x="0.700" y="0.700" width="26.600" height="27" fill="#fdf3ee" stroke="#d9683a" stroke-width="1.300"/><rect x="3.800" y="4" width="8.400" height="8.400" fill="#fff" stroke="#d9683a" stroke-width="1.200"/><rect x="15.800" y="4" width="8.400" height="8.400" fill="#fff" stroke="#d9683a" stroke-width="1.200"/><rect x="3.800" y="16" width="8.400" height="8.400" fill="#fff" stroke="#d9683a" stroke-width="1.200"/><rect x="15.800" y="16" width="8.400" height="8.400" fill="#fff" stroke="#d9683a" stroke-width="1.200"/></svg>
<div class="t" style="left:1076.98px;top:44px;font-size:12.4px;letter-spacing:0.066px;">Add-ins</div>
<div class="t" style="left:1078.82px;top:84px;font-size:11.6px;letter-spacing:-0.429px;color:#424242;">Add-ins</div>
<div style="left:1129.00px;top:6.00px;width:1.00px;height:88.50px;background:#e5e5e5"></div>
<svg style="left:1144.00px;top:8.00px;" width="33" height="30" viewBox="0 0 33 30"><path d="M20 2.200L26 3c1.800 0.300 2.600 1.500 2.900 3.300L29.300 9.500H21z" fill="#cfcfcf" stroke="#c2c2c2" stroke-width="0.800" stroke-linejoin="round"/><path d="M6.200 22.800H15l-1 5.600L9.500 27.800C7.800 27.500 6.800 26.300 6.500 24.800z" fill="#cfcfcf" stroke="#c2c2c2" stroke-width="0.800" stroke-linejoin="round"/><path d="M8.500 3C9.300 1.800 10.500 1.500 12 1.500h6.500c2 0 2.800 1.200 2.300 3l-4.300 16c-0.500 1.900-1.800 3-3.800 3H4.500c-2.300 0-3.800-1.800-3.200-4z" fill="#f1f1f1" stroke="#c2c2c2" stroke-width="0.900" stroke-linejoin="round"/><path d="M24.500 27c-0.800 1.200-2 1.500-3.500 1.500h-6.500c-2 0-2.800-1.200-2.300-3l4.300-14.500c0.500-1.900 1.800-3 3.800-3H28.500c2.300 0 3.800 1.800 3.200 4z" fill="#f4f4f4" stroke="#c2c2c2" stroke-width="0.900" stroke-linejoin="round"/></svg>
<div class="t" style="left:1139.98px;top:44px;font-size:12.4px;letter-spacing:0.273px;color:#b3b3b3;">Copilot</div>
<div style="left:1189.50px;top:6.00px;width:1.00px;height:88.50px;background:#e5e5e5"></div>
<svg style="left:1251.15px;top:84.65px;" width="9" height="5" viewBox="0 0 9 5"><path d="M0.300 0.300L4.50 4.60L8.70 0.300" fill="none" stroke="#3b3b3b" stroke-width="1.3" stroke-linecap="round" stroke-linejoin="round"/></svg>
</div>
</div>
<div id="fbar" class="abs">
<div class="L">
<div style="left:8.70px;top:5.70px;width:100.10px;height:21.20px;background:#fff;border-radius:3px"></div>
<div class="t" style="left:12.05px;top:11px;font-size:13px;letter-spacing:0.398px;">A1</div>
<svg style="left:94.20px;top:14.40px;" width="10" height="6" viewBox="0 0 10 6"><path d="M0.500 0.500L4.800 5L9.100 0.500" fill="none" stroke="#3b3b3b" stroke-width="1.300" stroke-linecap="round" stroke-linejoin="round"/></svg>
<svg style="left:118.00px;top:11.30px;" width="3.4" height="10" viewBox="0 0 3.4 10"><circle cx="1.650" cy="1.300" r="1.150" fill="#4a4a4a"/><circle cx="1.650" cy="5" r="1.150" fill="#4a4a4a"/><circle cx="1.650" cy="8.700" r="1.150" fill="#4a4a4a"/></svg>
<div style="left:130.80px;top:5.70px;width:84.40px;height:21.20px;background:#fff;border-radius:3px"></div>
<svg style="left:136.40px;top:10.40px;" width="12" height="12" viewBox="0 0 12 12"><path d="M0.500 0.500l11 11M11.500 0.500l-11 11" stroke="#a6a6a6" stroke-width="1.150" stroke-linecap="round"/></svg>
<svg style="left:158.90px;top:10.40px;" width="16" height="12" viewBox="0 0 16 12"><path d="M0.600 6.500L5 10.800L15 0.700" fill="none" stroke="#a6a6a6" stroke-width="1.150" stroke-linecap="round" stroke-linejoin="round"/></svg>
<div class="t" style="left:183.68px;top:8px;font-size:16.5px;letter-spacing:1.705px;font-weight:bold;font-style:italic;font-family:'Liberation Serif',serif;color:#333;">fx</div>
<svg style="left:204.20px;top:14.20px;" width="9.5" height="6" viewBox="0 0 9.5 6"><path d="M0.500 0.500L4.600 5L8.700 0.500" fill="none" stroke="#a6a6a6" stroke-width="1.150" stroke-linecap="round" stroke-linejoin="round"/></svg>
<div style="left:220.80px;top:5.70px;width:1055.90px;height:21.20px;background:#fff;border-radius:3px"></div>
<svg style="left:1264.00px;top:13.30px;" width="10" height="6" viewBox="0 0 10 6"><path d="M0.500 0.500L4.800 5L9.100 0.500" fill="none" stroke="#3b3b3b" stroke-width="1.300" stroke-linecap="round" stroke-linejoin="round"/></svg>
</div>
</div>
<div id="grid" class="abs">
<div class="L">
<div style="left:0.00px;top:0.00px;width:1280.00px;height:11.50px;background:#f3f3f3;"></div>
<div style="left:0.00px;top:3.80px;width:1265.50px;height:7.50px;background:#efefef;"></div>
<div style="left:0.00px;top:11.50px;width:13.00px;height:395.50px;background:#efefef;"></div>
<div style="left:13.00px;top:3.80px;width:71.30px;height:7.50px;background:#d2d2d2;"></div>
<div class="ch" style="left:13.00px;width:71.30px">A</div>
<div style="left:83.80px;top:4.50px;width:1.00px;height:6.80px;background:#c8c8c8;"></div>
<div class="ch" style="left:84.30px;width:77.30px">B</div>
<div style="left:161.10px;top:4.50px;width:1.00px;height:6.80px;background:#c8c8c8;"></div>
<div class="ch" style="left:161.60px;width:87.20px">C</div>
<div style="left:248.30px;top:4.50px;width:1.00px;height:6.80px;background:#c8c8c8;"></div>
<div class="ch" style="left:248.80px;width:72.60px">D</div>
<div style="left:320.90px;top:4.50px;width:1.00px;height:6.80px;background:#c8c8c8;"></div>
<div class="ch" style="left:321.40px;width:75.00px">E</div>
<div style="left:395.90px;top:4.50px;width:1.00px;height:6.80px;background:#c8c8c8;"></div>
<div class="ch" style="left:396.40px;width:53.10px">F</div>
<div style="left:449.00px;top:4.50px;width:1.00px;height:6.80px;background:#c8c8c8;"></div>
<div class="ch" style="left:449.50px;width:48.70px">G</div>
<div style="left:497.70px;top:4.50px;width:1.00px;height:6.80px;background:#c8c8c8;"></div>
<div class="ch" style="left:498.20px;width:76.00px">H</div>
<div style="left:573.70px;top:4.50px;width:1.00px;height:6.80px;background:#c8c8c8;"></div>
<div class="ch" style="left:574.20px;width:62.20px">I</div>
<div style="left:635.90px;top:4.50px;width:1.00px;height:6.80px;background:#c8c8c8;"></div>
<div class="ch" style="left:636.40px;width:37.20px">J</div>
<div style="left:673.10px;top:4.50px;width:1.00px;height:6.80px;background:#c8c8c8;"></div>
<div class="ch" style="left:673.60px;width:37.45px">K</div>
<div style="left:710.55px;top:4.50px;width:1.00px;height:6.80px;background:#c8c8c8;"></div>
<div class="ch" style="left:711.05px;width:37.45px">L</div>
<div style="left:748.00px;top:4.50px;width:1.00px;height:6.80px;background:#c8c8c8;"></div>
<div class="ch" style="left:748.50px;width:37.45px">M</div>
<div style="left:785.45px;top:4.50px;width:1.00px;height:6.80px;background:#c8c8c8;"></div>
<div class="ch" style="left:785.95px;width:37.45px">N</div>
<div style="left:822.90px;top:4.50px;width:1.00px;height:6.80px;background:#c8c8c8;"></div>
<div class="ch" style="left:823.40px;width:37.45px">O</div>
<div style="left:860.35px;top:4.50px;width:1.00px;height:6.80px;background:#c8c8c8;"></div>
<div class="ch" style="left:860.85px;width:37.45px">P</div>
<div style="left:897.80px;top:4.50px;width:1.00px;height:6.80px;background:#c8c8c8;"></div>
<div class="ch" style="left:898.30px;width:37.45px">Q</div>
<div style="left:935.25px;top:4.50px;width:1.00px;height:6.80px;background:#c8c8c8;"></div>
<div class="ch" style="left:935.75px;width:37.45px">R</div>
<div style="left:972.70px;top:4.50px;width:1.00px;height:6.80px;background:#c8c8c8;"></div>
<div class="ch" style="left:973.20px;width:37.45px">S</div>
<div style="left:1010.15px;top:4.50px;width:1.00px;height:6.80px;background:#c8c8c8;"></div>
<div class="ch" style="left:1010.65px;width:37.45px">T</div>
<div style="left:1047.60px;top:4.50px;width:1.00px;height:6.80px;background:#c8c8c8;"></div>
<div class="ch" style="left:1048.10px;width:37.45px">U</div>
<div style="left:1085.05px;top:4.50px;width:1.00px;height:6.80px;background:#c8c8c8;"></div>
<div class="ch" style="left:1085.55px;width:37.45px">V</div>
<div style="left:1122.50px;top:4.50px;width:1.00px;height:6.80px;background:#c8c8c8;"></div>
<div class="ch" style="left:1123.00px;width:37.45px">W</div>
<div style="left:1159.95px;top:4.50px;width:1.00px;height:6.80px;background:#c8c8c8;"></div>
<div class="ch" style="left:1160.45px;width:37.45px">X</div>
<div style="left:1197.40px;top:4.50px;width:1.00px;height:6.80px;background:#c8c8c8;"></div>
<div class="ch" style="left:1197.90px;width:37.45px">Y</div>
<div style="left:1234.85px;top:4.50px;width:1.00px;height:6.80px;background:#c8c8c8;"></div>
<div class="ch" style="left:1235.35px;width:37.45px">Z</div>
<div class="rh" style="top:11.50px">44</div>
<div style="left:13.00px;top:17.50px;width:1252.50px;height:1.00px;background:#ececec;"></div>
<div style="left:0.00px;top:17.50px;width:13.00px;height:1.00px;background:#cfcfcf;"></div>
<div class="rh" style="top:21.30px">45</div>
<div style="left:13.00px;top:27.30px;width:1252.50px;height:1.00px;background:#ececec;"></div>
<div style="left:0.00px;top:27.30px;width:13.00px;height:1.00px;background:#cfcfcf;"></div>
<div class="rh" style="top:29.20px">46</div>
<div style="left:13.00px;top:35.20px;width:1252.50px;height:1.00px;background:#ececec;"></div>
<div style="left:0.00px;top:35.20px;width:13.00px;height:1.00px;background:#cfcfcf;"></div>
<div class="rh" style="top:36.53px">47</div>
<div style="left:13.00px;top:42.53px;width:1252.50px;height:1.00px;background:#ececec;"></div>
<div style="left:0.00px;top:42.53px;width:13.00px;height:1.00px;background:#cfcfcf;"></div>
<div class="rh" style="top:43.87px">48</div>
<div style="left:13.00px;top:49.87px;width:1252.50px;height:1.00px;background:#ececec;"></div>
<div style="left:0.00px;top:49.87px;width:13.00px;height:1.00px;background:#cfcfcf;"></div>
<div class="rh" style="top:51.20px">49</div>
<div style="left:13.00px;top:57.20px;width:1252.50px;height:1.00px;background:#ececec;"></div>
<div style="left:0.00px;top:57.20px;width:13.00px;height:1.00px;background:#cfcfcf;"></div>
<div class="rh" style="top:58.54px">50</div>
<div style="left:13.00px;top:64.54px;width:1252.50px;height:1.00px;background:#ececec;"></div>
<div style="left:0.00px;top:64.54px;width:13.00px;height:1.00px;background:#cfcfcf;"></div>
<div class="rh" style="top:65.87px">51</div>
<div style="left:13.00px;top:71.87px;width:1252.50px;height:1.00px;background:#ececec;"></div>
<div style="left:0.00px;top:71.87px;width:13.00px;height:1.00px;background:#cfcfcf;"></div>
<div class="rh" style="top:73.21px">52</div>
<div style="left:13.00px;top:79.21px;width:1252.50px;height:1.00px;background:#ececec;"></div>
<div style="left:0.00px;top:79.21px;width:13.00px;height:1.00px;background:#cfcfcf;"></div>
<div class="rh" style="top:80.54px">53</div>
<div style="left:13.00px;top:86.54px;width:1252.50px;height:1.00px;background:#ececec;"></div>
<div style="left:0.00px;top:86.54px;width:13.00px;height:1.00px;background:#cfcfcf;"></div>
<div class="rh" style="top:87.88px">54</div>
<div style="left:13.00px;top:93.88px;width:1252.50px;height:1.00px;background:#ececec;"></div>
<div style="left:0.00px;top:93.88px;width:13.00px;height:1.00px;background:#cfcfcf;"></div>
<div class="rh" style="top:95.21px">55</div>
<div style="left:13.00px;top:101.21px;width:1252.50px;height:1.00px;background:#ececec;"></div>
<div style="left:0.00px;top:101.21px;width:13.00px;height:1.00px;background:#cfcfcf;"></div>
<div class="rh" style="top:102.55px">56</div>
<div style="left:13.00px;top:108.55px;width:1252.50px;height:1.00px;background:#ececec;"></div>
<div style="left:0.00px;top:108.55px;width:13.00px;height:1.00px;background:#cfcfcf;"></div>
<div class="rh" style="top:109.88px">57</div>
<div style="left:13.00px;top:115.88px;width:1252.50px;height:1.00px;background:#ececec;"></div>
<div style="left:0.00px;top:115.88px;width:13.00px;height:1.00px;background:#cfcfcf;"></div>
<div class="rh" style="top:117.22px">58</div>
<div style="left:13.00px;top:123.22px;width:1252.50px;height:1.00px;background:#ececec;"></div>
<div style="left:0.00px;top:123.22px;width:13.00px;height:1.00px;background:#cfcfcf;"></div>
<div class="rh" style="top:124.55px">59</div>
<div style="left:13.00px;top:130.55px;width:1252.50px;height:1.00px;background:#ececec;"></div>
<div style="left:0.00px;top:130.55px;width:13.00px;height:1.00px;background:#cfcfcf;"></div>
<div class="rh" style="top:131.89px">60</div>
<div style="left:13.00px;top:137.89px;width:1252.50px;height:1.00px;background:#ececec;"></div>
<div style="left:0.00px;top:137.89px;width:13.00px;height:1.00px;background:#cfcfcf;"></div>
<div class="rh" style="top:139.22px">61</div>
<div style="left:13.00px;top:145.22px;width:1252.50px;height:1.00px;background:#ececec;"></div>
<div style="left:0.00px;top:145.22px;width:13.00px;height:1.00px;background:#cfcfcf;"></div>
<div class="rh" style="top:146.56px">62</div>
<div style="left:13.00px;top:152.56px;width:1252.50px;height:1.00px;background:#ececec;"></div>
<div style="left:0.00px;top:152.56px;width:13.00px;height:1.00px;background:#cfcfcf;"></div>
<div class="rh" style="top:153.89px">63</div>
<div style="left:13.00px;top:159.89px;width:1252.50px;height:1.00px;background:#ececec;"></div>
<div style="left:0.00px;top:159.89px;width:13.00px;height:1.00px;background:#cfcfcf;"></div>
<div class="rh" style="top:161.23px">64</div>
<div style="left:13.00px;top:167.23px;width:1252.50px;height:1.00px;background:#ececec;"></div>
<div style="left:0.00px;top:167.23px;width:13.00px;height:1.00px;background:#cfcfcf;"></div>
<div class="rh" style="top:168.56px">65</div>
<div style="left:13.00px;top:174.56px;width:1252.50px;height:1.00px;background:#ececec;"></div>
<div style="left:0.00px;top:174.56px;width:13.00px;height:1.00px;background:#cfcfcf;"></div>
<div class="rh" style="top:175.90px">66</div>
<div style="left:13.00px;top:181.90px;width:1252.50px;height:1.00px;background:#ececec;"></div>
<div style="left:0.00px;top:181.90px;width:13.00px;height:1.00px;background:#cfcfcf;"></div>
<div class="rh" style="top:182.70px">67</div>
<div style="left:13.00px;top:188.70px;width:1252.50px;height:1.00px;background:#ececec;"></div>
<div style="left:0.00px;top:188.70px;width:13.00px;height:1.00px;background:#cfcfcf;"></div>
<div class="rh" style="top:192.50px">68</div>
<div style="left:13.00px;top:198.50px;width:1252.50px;height:1.00px;background:#ececec;"></div>
<div style="left:0.00px;top:198.50px;width:13.00px;height:1.00px;background:#cfcfcf;"></div>
<div class="rh" style="top:200.80px">69</div>
<div style="left:13.00px;top:206.80px;width:1252.50px;height:1.00px;background:#ececec;"></div>
<div style="left:0.00px;top:206.80px;width:13.00px;height:1.00px;background:#cfcfcf;"></div>
<div class="rh" style="top:208.87px">70</div>
<div style="left:13.00px;top:214.87px;width:1252.50px;height:1.00px;background:#ececec;"></div>
<div style="left:0.00px;top:214.87px;width:13.00px;height:1.00px;background:#cfcfcf;"></div>
<div class="rh" style="top:216.94px">71</div>
<div style="left:13.00px;top:222.94px;width:1252.50px;height:1.00px;background:#ececec;"></div>
<div style="left:0.00px;top:222.94px;width:13.00px;height:1.00px;background:#cfcfcf;"></div>
<div class="rh" style="top:225.01px">72</div>
<div style="left:13.00px;top:231.01px;width:1252.50px;height:1.00px;background:#ececec;"></div>
<div style="left:0.00px;top:231.01px;width:13.00px;height:1.00px;background:#cfcfcf;"></div>
<div class="rh" style="top:233.08px">73</div>
<div style="left:13.00px;top:239.08px;width:1252.50px;height:1.00px;background:#ececec;"></div>
<div style="left:0.00px;top:239.08px;width:13.00px;height:1.00px;background:#cfcfcf;"></div>
<div class="rh" style="top:241.15px">74</div>
<div style="left:13.00px;top:247.15px;width:1252.50px;height:1.00px;background:#ececec;"></div>
<div style="left:0.00px;top:247.15px;width:13.00px;height:1.00px;background:#cfcfcf;"></div>
<div class="rh" style="top:249.22px">75</div>
<div style="left:13.00px;top:255.22px;width:1252.50px;height:1.00px;background:#ececec;"></div>
<div style="left:0.00px;top:255.22px;width:13.00px;height:1.00px;background:#cfcfcf;"></div>
<div class="rh" style="top:257.29px">76</div>
<div style="left:13.00px;top:263.29px;width:1252.50px;height:1.00px;background:#ececec;"></div>
<div style="left:0.00px;top:263.29px;width:13.00px;height:1.00px;background:#cfcfcf;"></div>
<div class="rh" style="top:265.36px">77</div>
<div style="left:13.00px;top:271.36px;width:1252.50px;height:1.00px;background:#ececec;"></div>
<div style="left:0.00px;top:271.36px;width:13.00px;height:1.00px;background:#cfcfcf;"></div>
<div class="rh" style="top:273.43px">78</div>
<div style="left:13.00px;top:279.43px;width:1252.50px;height:1.00px;background:#ececec;"></div>
<div style="left:0.00px;top:279.43px;width:13.00px;height:1.00px;background:#cfcfcf;"></div>
<div class="rh" style="top:281.50px">79</div>
<div style="left:13.00px;top:287.50px;width:1252.50px;height:1.00px;background:#ececec;"></div>
<div style="left:0.00px;top:287.50px;width:13.00px;height:1.00px;background:#cfcfcf;"></div>
<div class="rh" style="top:289.00px">80</div>
<div style="left:13.00px;top:295.00px;width:1252.50px;height:1.00px;background:#ececec;"></div>
<div style="left:0.00px;top:295.00px;width:13.00px;height:1.00px;background:#cfcfcf;"></div>
<div class="rh" style="top:296.50px">81</div>
<div style="left:13.00px;top:302.50px;width:1252.50px;height:1.00px;background:#ececec;"></div>
<div style="left:0.00px;top:302.50px;width:13.00px;height:1.00px;background:#cfcfcf;"></div>
<div class="rh" style="top:304.00px">82</div>
<div style="left:13.00px;top:310.00px;width:1252.50px;height:1.00px;background:#ececec;"></div>
<div style="left:0.00px;top:310.00px;width:13.00px;height:1.00px;background:#cfcfcf;"></div>
<div class="rh" style="top:311.50px">83</div>
<div style="left:13.00px;top:317.50px;width:1252.50px;height:1.00px;background:#ececec;"></div>
<div style="left:0.00px;top:317.50px;width:13.00px;height:1.00px;background:#cfcfcf;"></div>
<div class="rh" style="top:319.00px">84</div>
<div style="left:13.00px;top:325.00px;width:1252.50px;height:1.00px;background:#ececec;"></div>
<div style="left:0.00px;top:325.00px;width:13.00px;height:1.00px;background:#cfcfcf;"></div>
<div class="rh" style="top:326.50px">85</div>
<div style="left:13.00px;top:332.50px;width:1252.50px;height:1.00px;background:#ececec;"></div>
<div style="left:0.00px;top:332.50px;width:13.00px;height:1.00px;background:#cfcfcf;"></div>
<div class="rh" style="top:334.00px">86</div>
<div style="left:13.00px;top:340.00px;width:1252.50px;height:1.00px;background:#ececec;"></div>
<div style="left:0.00px;top:340.00px;width:13.00px;height:1.00px;background:#cfcfcf;"></div>
<div class="rh" style="top:341.50px">87</div>
<div style="left:13.00px;top:347.50px;width:1252.50px;height:1.00px;background:#ececec;"></div>
<div style="left:0.00px;top:347.50px;width:13.00px;height:1.00px;background:#cfcfcf;"></div>
<div class="rh" style="top:349.00px">88</div>
<div style="left:13.00px;top:355.00px;width:1252.50px;height:1.00px;background:#ececec;"></div>
<div style="left:0.00px;top:355.00px;width:13.00px;height:1.00px;background:#cfcfcf;"></div>
<div class="rh" style="top:356.50px">89</div>
<div style="left:13.00px;top:362.50px;width:1252.50px;height:1.00px;background:#ececec;"></div>
<div style="left:0.00px;top:362.50px;width:13.00px;height:1.00px;background:#cfcfcf;"></div>
<div class="rh" style="top:364.00px">90</div>
<div style="left:13.00px;top:370.00px;width:1252.50px;height:1.00px;background:#ececec;"></div>
<div style="left:0.00px;top:370.00px;width:13.00px;height:1.00px;background:#cfcfcf;"></div>
<div class="rh" style="top:371.50px">91</div>
<div style="left:13.00px;top:377.50px;width:1252.50px;height:1.00px;background:#ececec;"></div>
<div style="left:0.00px;top:377.50px;width:13.00px;height:1.00px;background:#cfcfcf;"></div>
<div class="rh" style="top:379.00px">92</div>
<div style="left:13.00px;top:385.00px;width:1252.50px;height:1.00px;background:#ececec;"></div>
<div style="left:0.00px;top:385.00px;width:13.00px;height:1.00px;background:#cfcfcf;"></div>
<div class="rh" style="top:386.50px">93</div>
<div style="left:13.00px;top:392.50px;width:1252.50px;height:1.00px;background:#ececec;"></div>
<div style="left:0.00px;top:392.50px;width:13.00px;height:1.00px;background:#cfcfcf;"></div>
<div class="rh" style="top:394.00px">94</div>
<div style="left:13.00px;top:400.00px;width:1252.50px;height:1.00px;background:#ececec;"></div>
<div style="left:0.00px;top:400.00px;width:13.00px;height:1.00px;background:#cfcfcf;"></div>
<div class="rh" style="top:401.50px">95</div>
<div style="left:13.00px;top:407.50px;width:1252.50px;height:1.00px;background:#ececec;"></div>
<div style="left:0.00px;top:407.50px;width:13.00px;height:1.00px;background:#cfcfcf;"></div>
<div style="left:83.80px;top:11.50px;width:1.00px;height:395.50px;background:#e4e4e4;"></div>
<div style="left:161.10px;top:11.50px;width:1.00px;height:395.50px;background:#e4e4e4;"></div>
<div style="left:248.30px;top:11.50px;width:1.00px;height:395.50px;background:#e4e4e4;"></div>
<div style="left:320.90px;top:11.50px;width:1.00px;height:395.50px;background:#e4e4e4;"></div>
<div style="left:395.90px;top:11.50px;width:1.00px;height:395.50px;background:#e4e4e4;"></div>
<div style="left:449.00px;top:11.50px;width:1.00px;height:395.50px;background:#e4e4e4;"></div>
<div style="left:497.70px;top:11.50px;width:1.00px;height:395.50px;background:#e4e4e4;"></div>
<div style="left:573.70px;top:11.50px;width:1.00px;height:395.50px;background:#e4e4e4;"></div>
<div style="left:635.90px;top:11.50px;width:1.00px;height:395.50px;background:#e4e4e4;"></div>
<div style="left:673.10px;top:11.50px;width:1.00px;height:395.50px;background:#e4e4e4;"></div>
<div style="left:710.55px;top:11.50px;width:1.00px;height:395.50px;background:#e4e4e4;"></div>
<div style="left:748.00px;top:11.50px;width:1.00px;height:395.50px;background:#e4e4e4;"></div>
<div style="left:785.45px;top:11.50px;width:1.00px;height:395.50px;background:#e4e4e4;"></div>
<div style="left:822.90px;top:11.50px;width:1.00px;height:395.50px;background:#e4e4e4;"></div>
<div style="left:860.35px;top:11.50px;width:1.00px;height:395.50px;background:#e4e4e4;"></div>
<div style="left:897.80px;top:11.50px;width:1.00px;height:395.50px;background:#e4e4e4;"></div>
<div style="left:935.25px;top:11.50px;width:1.00px;height:395.50px;background:#e4e4e4;"></div>
<div style="left:972.70px;top:11.50px;width:1.00px;height:395.50px;background:#e4e4e4;"></div>
<div style="left:1010.15px;top:11.50px;width:1.00px;height:395.50px;background:#e4e4e4;"></div>
<div style="left:1047.60px;top:11.50px;width:1.00px;height:395.50px;background:#e4e4e4;"></div>
<div style="left:1085.05px;top:11.50px;width:1.00px;height:395.50px;background:#e4e4e4;"></div>
<div style="left:1122.50px;top:11.50px;width:1.00px;height:395.50px;background:#e4e4e4;"></div>
<div style="left:1159.95px;top:11.50px;width:1.00px;height:395.50px;background:#e4e4e4;"></div>
<div style="left:1197.40px;top:11.50px;width:1.00px;height:395.50px;background:#e4e4e4;"></div>
<div style="left:1234.85px;top:11.50px;width:1.00px;height:395.50px;background:#e4e4e4;"></div>
<div style="left:12.50px;top:11.50px;width:1.00px;height:395.50px;background:#cfcfcf;"></div>
<div style="left:1265.00px;top:3.80px;width:1.00px;height:403.20px;background:#ececec;"></div>
<div style="left:13.00px;top:11.00px;width:485.20px;height:1.00px;background:#303030;"></div>
<div style="left:13.00px;top:10.10px;width:71.30px;height:1.40px;background:#17683c;"></div>
<div style="left:13.00px;top:18.00px;width:660.60px;height:9.80px;background:#999999;"></div>
<div style="left:13.00px;top:27.80px;width:660.60px;height:7.90px;background:#b7b7b7;"></div>
<div style="left:673.60px;top:35.20px;width:37.40px;height:110.52px;background:#00ff00;"></div>
<div style="left:673.60px;top:145.72px;width:37.40px;height:22.01px;background:#ffff00;"></div>
<div style="left:13.00px;top:189.20px;width:623.40px;height:9.80px;background:#999999;"></div>
<div style="left:13.00px;top:199.00px;width:623.40px;height:8.30px;background:#b7b7b7;"></div>
<div style="left:13.50px;top:207.30px;width:622.90px;height:16.14px;background:#f4f6f9;"></div>
<div style="left:13.50px;top:223.44px;width:622.90px;height:8.07px;background:#f4f6f9;"></div>
<div style="left:13.50px;top:231.51px;width:622.90px;height:40.35px;background:#fff;"></div>
<div style="left:13.50px;top:271.86px;width:622.90px;height:8.07px;background:#f4f6f9;"></div>
<div style="left:13.50px;top:279.93px;width:622.90px;height:8.07px;background:#fff;"></div>
<div style="left:13.50px;top:288.00px;width:622.90px;height:45.00px;background:#f4f6f9;"></div>
<div style="left:13.50px;top:333.00px;width:622.90px;height:7.50px;background:#fff;"></div>
<div style="left:84.80px;top:340.50px;width:551.60px;height:37.50px;background:#f4f6f9;"></div>
<div style="left:13.50px;top:340.50px;width:70.80px;height:37.50px;background:#fff;"></div>
<div style="left:13.50px;top:378.00px;width:622.90px;height:7.50px;background:#fff;"></div>
<div style="left:13.50px;top:385.50px;width:622.90px;height:22.50px;background:#fff;"></div>
<div style="left:636.40px;top:207.30px;width:37.20px;height:24.21px;background:#4a86e8;"></div>
<div style="left:636.40px;top:231.51px;width:37.20px;height:40.35px;background:#00ff00;"></div>
<div style="left:636.40px;top:271.86px;width:37.20px;height:106.14px;background:#ff9900;"></div>
<div style="left:636.40px;top:378.00px;width:37.20px;height:7.50px;background:#4a86e8;"></div>
<div style="left:636.40px;top:385.50px;width:37.20px;height:7.50px;background:#ffff00;"></div>
<div style="left:83.70px;top:27.80px;width:1.20px;height:154.60px;background:#505050;"></div>
<div style="left:161.00px;top:27.80px;width:1.20px;height:154.60px;background:#505050;"></div>
<div style="left:248.20px;top:27.80px;width:1.20px;height:154.60px;background:#505050;"></div>
<div style="left:320.80px;top:27.80px;width:1.20px;height:154.60px;background:#505050;"></div>
<div style="left:395.80px;top:27.80px;width:1.20px;height:154.60px;background:#505050;"></div>
<div style="left:448.90px;top:27.80px;width:1.20px;height:154.60px;background:#505050;"></div>
<div style="left:497.60px;top:27.80px;width:1.20px;height:154.60px;background:#505050;"></div>
<div style="left:573.60px;top:27.80px;width:1.20px;height:154.60px;background:#505050;"></div>
<div style="left:635.80px;top:27.80px;width:1.20px;height:154.60px;background:#505050;"></div>
<div style="left:673.00px;top:27.80px;width:1.20px;height:154.60px;background:#505050;"></div>
<div style="left:13.00px;top:181.80px;width:661.20px;height:1.20px;background:#505050;"></div>
<div style="left:83.70px;top:207.30px;width:1.20px;height:199.70px;background:#505050;"></div>
<div style="left:161.00px;top:207.30px;width:1.20px;height:199.70px;background:#505050;"></div>
<div style="left:248.20px;top:207.30px;width:1.20px;height:199.70px;background:#505050;"></div>
<div style="left:320.80px;top:207.30px;width:1.20px;height:199.70px;background:#505050;"></div>
<div style="left:395.80px;top:207.30px;width:1.20px;height:199.70px;background:#505050;"></div>
<div style="left:448.90px;top:207.30px;width:1.20px;height:199.70px;background:#505050;"></div>
<div style="left:497.60px;top:207.30px;width:1.20px;height:199.70px;background:#505050;"></div>
<div style="left:573.60px;top:207.30px;width:1.20px;height:199.70px;background:#505050;"></div>
<div style="left:635.80px;top:207.30px;width:1.20px;height:199.70px;background:#505050;"></div>
<div class="ti" style="left:14.00px;top:18.00px;width:658.60px;height:9.80px;line-height:10.80px;text-align:center;">Set and Props</div>
<div class="h" style="left:14.00px;top:27.80px;width:69.30px;height:7.90px;line-height:8.90px;text-align:center;">ITEM</div>
<div class="h" style="left:86.50px;top:27.80px;width:74.70px;height:7.90px;line-height:8.90px;">QTY</div>
<div class="h" style="left:163.80px;top:27.80px;width:84.60px;height:7.90px;line-height:8.90px;">DESCRIPTION</div>
<div class="h" style="left:251.00px;top:27.80px;width:70.00px;height:7.90px;line-height:8.90px;">LOCATION</div>
<div class="h" style="left:323.60px;top:27.80px;width:72.40px;height:7.90px;line-height:8.90px;">COST/UNIT</div>
<div class="h" style="left:398.60px;top:27.80px;width:50.50px;height:7.90px;line-height:8.90px;">EST. TOTAL</div>
<div class="h" style="left:451.70px;top:27.80px;width:46.10px;height:7.90px;line-height:8.90px;">SHIPPING FEE</div>
<div class="h" style="left:500.40px;top:27.80px;width:73.40px;height:7.90px;line-height:8.90px;">DISCOUNT</div>
<div class="h" style="left:638.60px;top:27.80px;width:34.60px;height:7.90px;line-height:8.90px;">TOTAL</div>
<div class="c" style="left:576.40px;top:27.80px;width:59.60px;height:7.90px;line-height:8.90px;">SALES TAX (Inclusive)</div>
<div class="tri" style="left:13.50px;top:36.00px"></div>
<div class="c" style="left:15.20px;top:35.70px;width:68.70px;height:7.33px;line-height:8.33px;margin-left:-1px;">1</div>
<div class="c" style="left:85.30px;top:35.70px;width:75.30px;height:7.33px;line-height:8.33px;text-align:right;">1</div>
<div class="c" style="left:163.80px;top:35.70px;width:84.60px;height:7.33px;line-height:8.33px;">HPRT Z1 Instant Print Camera</div>
<div class="c" style="left:251.00px;top:35.70px;width:70.00px;height:7.33px;line-height:8.33px;">SHOPEE251230PJ5UFVI</div>
<div class="c" style="left:322.40px;top:35.70px;width:73.00px;height:7.33px;line-height:8.33px;text-align:right;">$159.90</div>
<div class="c" style="left:397.40px;top:35.70px;width:51.10px;height:7.33px;line-height:8.33px;text-align:right;">$159.90</div>
<div class="c" style="left:450.50px;top:35.70px;width:46.70px;height:7.33px;line-height:8.33px;text-align:right;">$1.99</div>
<div class="c" style="left:499.20px;top:35.70px;width:74.00px;height:7.33px;line-height:8.33px;text-align:right;">-$11.99</div>
<div class="c" style="left:575.20px;top:35.70px;width:60.20px;height:7.33px;line-height:8.33px;text-align:right;">$0.00</div>
<div class="c" style="left:637.40px;top:35.70px;width:35.20px;height:7.33px;line-height:8.33px;text-align:right;">$149.90</div>
<div class="tri" style="left:13.50px;top:43.33px"></div>
<div class="c" style="left:15.20px;top:43.03px;width:68.70px;height:7.34px;line-height:8.34px;margin-left:-1px;">2</div>
<div class="c" style="left:85.30px;top:43.03px;width:75.30px;height:7.34px;line-height:8.34px;text-align:right;">1</div>
<div class="c" style="left:163.80px;top:43.03px;width:84.60px;height:7.34px;line-height:8.34px;">5Pcs Stainless Steel Storage B</div>
<div class="c" style="left:251.00px;top:43.03px;width:70.00px;height:7.34px;line-height:8.34px;">SHOPEE251230PJ5UFVI</div>
<div class="c" style="left:322.40px;top:43.03px;width:73.00px;height:7.34px;line-height:8.34px;text-align:right;">$6.95</div>
<div class="c" style="left:397.40px;top:43.03px;width:51.10px;height:7.34px;line-height:8.34px;text-align:right;">$6.95</div>
<div class="c" style="left:450.50px;top:43.03px;width:46.70px;height:7.34px;line-height:8.34px;text-align:right;">$1.99</div>
<div class="c" style="left:499.20px;top:43.03px;width:74.00px;height:7.34px;line-height:8.34px;text-align:right;">$0.00</div>
<div class="c" style="left:575.20px;top:43.03px;width:60.20px;height:7.34px;line-height:8.34px;text-align:right;">$0.00</div>
<div class="c" style="left:637.40px;top:43.03px;width:35.20px;height:7.34px;line-height:8.34px;text-align:right;">$8.94</div>
<div class="tri" style="left:13.50px;top:50.67px"></div>
<div class="c" style="left:15.20px;top:50.37px;width:68.70px;height:7.33px;line-height:8.33px;margin-left:-1px;">3</div>
<div class="c" style="left:85.30px;top:50.37px;width:75.30px;height:7.33px;line-height:8.33px;text-align:right;">1</div>
<div class="c" style="left:163.80px;top:50.37px;width:84.60px;height:7.33px;line-height:8.33px;">Electric Oil Lamp</div>
<div class="c" style="left:251.00px;top:50.37px;width:70.00px;height:7.33px;line-height:8.33px;">SHOPEE251230PJ5UFVI</div>
<div class="c" style="left:322.40px;top:50.37px;width:73.00px;height:7.33px;line-height:8.33px;text-align:right;">$3.97</div>
<div class="c" style="left:397.40px;top:50.37px;width:51.10px;height:7.33px;line-height:8.33px;text-align:right;">$3.97</div>
<div class="c" style="left:450.50px;top:50.37px;width:46.70px;height:7.33px;line-height:8.33px;text-align:right;">$1.99</div>
<div class="c" style="left:499.20px;top:50.37px;width:74.00px;height:7.33px;line-height:8.33px;text-align:right;">-$0.20</div>
<div class="c" style="left:575.20px;top:50.37px;width:60.20px;height:7.33px;line-height:8.33px;text-align:right;">$0.00</div>
<div class="c" style="left:637.40px;top:50.37px;width:35.20px;height:7.33px;line-height:8.33px;text-align:right;">$5.76</div>
<div class="tri" style="left:13.50px;top:58.00px"></div>
<div class="c" style="left:15.20px;top:57.70px;width:68.70px;height:7.34px;line-height:8.34px;margin-left:-1px;">4</div>
<div class="c" style="left:85.30px;top:57.70px;width:75.30px;height:7.34px;line-height:8.34px;text-align:right;">1</div>
<div class="c" style="left:163.80px;top:57.70px;width:84.60px;height:7.34px;line-height:8.34px;">Key Ring Antique Style</div>
<div class="c" style="left:251.00px;top:57.70px;width:70.00px;height:7.34px;line-height:8.34px;">SHOPEE251230PJ5UFVI</div>
<div class="c" style="left:322.40px;top:57.70px;width:73.00px;height:7.34px;line-height:8.34px;text-align:right;">$10.38</div>
<div class="c" style="left:397.40px;top:57.70px;width:51.10px;height:7.34px;line-height:8.34px;text-align:right;">$10.38</div>
<div class="c" style="left:450.50px;top:57.70px;width:46.70px;height:7.34px;line-height:8.34px;text-align:right;">$1.99</div>
<div class="c" style="left:499.20px;top:57.70px;width:74.00px;height:7.34px;line-height:8.34px;text-align:right;">$0.00</div>
<div class="c" style="left:575.20px;top:57.70px;width:60.20px;height:7.34px;line-height:8.34px;text-align:right;">$0.00</div>
<div class="c" style="left:637.40px;top:57.70px;width:35.20px;height:7.34px;line-height:8.34px;text-align:right;">$12.37</div>
<div class="tri" style="left:13.50px;top:65.34px"></div>
<div class="c" style="left:15.20px;top:65.04px;width:68.70px;height:7.33px;line-height:8.33px;margin-left:-1px;">5</div>
<div class="c" style="left:85.30px;top:65.04px;width:75.30px;height:7.33px;line-height:8.33px;text-align:right;">1</div>
<div class="c" style="left:163.80px;top:65.04px;width:84.60px;height:7.33px;line-height:8.33px;">Engraved Personalised Army N</div>
<div class="c" style="left:251.00px;top:65.04px;width:70.00px;height:7.33px;line-height:8.33px;">SHOPEE251230PJ5UFVI</div>
<div class="c" style="left:322.40px;top:65.04px;width:73.00px;height:7.33px;line-height:8.33px;text-align:right;">$11.88</div>
<div class="c" style="left:397.40px;top:65.04px;width:51.10px;height:7.33px;line-height:8.33px;text-align:right;">$11.88</div>
<div class="c" style="left:450.50px;top:65.04px;width:46.70px;height:7.33px;line-height:8.33px;text-align:right;">$1.99</div>
<div class="c" style="left:499.20px;top:65.04px;width:74.00px;height:7.33px;line-height:8.33px;text-align:right;">$0.00</div>
<div class="c" style="left:575.20px;top:65.04px;width:60.20px;height:7.33px;line-height:8.33px;text-align:right;">$0.00</div>
<div class="c" style="left:637.40px;top:65.04px;width:35.20px;height:7.33px;line-height:8.33px;text-align:right;">$13.87</div>
<div class="tri" style="left:13.50px;top:72.67px"></div>
<div class="c" style="left:15.20px;top:72.37px;width:68.70px;height:7.34px;line-height:8.34px;margin-left:-1px;">6</div>
<div class="c" style="left:85.30px;top:72.37px;width:75.30px;height:7.34px;line-height:8.34px;text-align:right;">4</div>
<div class="c" style="left:163.80px;top:72.37px;width:84.60px;height:7.34px;line-height:8.34px;">Stacking Stool Grey25(L)x25(W</div>
<div class="c" style="left:251.00px;top:72.37px;width:70.00px;height:7.34px;line-height:8.34px;">JAPAN HOMECP01T2f5</div>
<div class="c" style="left:322.40px;top:72.37px;width:73.00px;height:7.34px;line-height:8.34px;text-align:right;">$4.50</div>
<div class="c" style="left:397.40px;top:72.37px;width:51.10px;height:7.34px;line-height:8.34px;text-align:right;">$18.00</div>
<div class="c" style="left:450.50px;top:72.37px;width:46.70px;height:7.34px;line-height:8.34px;text-align:right;">$0.00</div>
<div class="c" style="left:499.20px;top:72.37px;width:74.00px;height:7.34px;line-height:8.34px;text-align:right;">$0.00</div>
<div class="c" style="left:575.20px;top:72.37px;width:60.20px;height:7.34px;line-height:8.34px;text-align:right;">$0.00</div>
<div class="c" style="left:637.40px;top:72.37px;width:35.20px;height:7.34px;line-height:8.34px;text-align:right;">$18.00</div>
<div class="tri" style="left:13.50px;top:80.01px"></div>
<div class="c" style="left:15.20px;top:79.71px;width:68.70px;height:7.33px;line-height:8.33px;margin-left:-1px;">7</div>
<div class="c" style="left:85.30px;top:79.71px;width:75.30px;height:7.33px;line-height:8.33px;text-align:right;">1</div>
<div class="c" style="left:163.80px;top:79.71px;width:84.60px;height:7.33px;line-height:8.33px;">Fake Bread</div>
<div class="c" style="left:251.00px;top:79.71px;width:70.00px;height:7.33px;line-height:8.33px;">SHOPEE251230PJ5UFVI</div>
<div class="c" style="left:322.40px;top:79.71px;width:73.00px;height:7.33px;line-height:8.33px;text-align:right;">$2.31</div>
<div class="c" style="left:397.40px;top:79.71px;width:51.10px;height:7.33px;line-height:8.33px;text-align:right;">$2.31</div>
<div class="c" style="left:450.50px;top:79.71px;width:46.70px;height:7.33px;line-height:8.33px;text-align:right;">$1.99</div>
<div class="c" style="left:499.20px;top:79.71px;width:74.00px;height:7.33px;line-height:8.33px;text-align:right;">$0.00</div>
<div class="c" style="left:575.20px;top:79.71px;width:60.20px;height:7.33px;line-height:8.33px;text-align:right;">$0.00</div>
<div class="c" style="left:637.40px;top:79.71px;width:35.20px;height:7.33px;line-height:8.33px;text-align:right;">$4.30</div>
<div class="tri" style="left:13.50px;top:87.34px"></div>
<div class="c" style="left:15.20px;top:87.04px;width:68.70px;height:7.34px;line-height:8.34px;margin-left:-1px;">8</div>
<div class="c" style="left:85.30px;top:87.04px;width:75.30px;height:7.34px;line-height:8.34px;text-align:right;">4</div>
<div class="c" style="left:163.80px;top:87.04px;width:84.60px;height:7.34px;line-height:8.34px;">Cardboard Box</div>
<div class="c" style="left:251.00px;top:87.04px;width:70.00px;height:7.34px;line-height:8.34px;">SHOPEE260112TUBH1M5</div>
<div class="c" style="left:322.40px;top:87.04px;width:73.00px;height:7.34px;line-height:8.34px;text-align:right;">$3.00</div>
<div class="c" style="left:397.40px;top:87.04px;width:51.10px;height:7.34px;line-height:8.34px;text-align:right;">$12.00</div>
<div class="c" style="left:450.50px;top:87.04px;width:46.70px;height:7.34px;line-height:8.34px;text-align:right;">$1.99</div>
<div class="c" style="left:499.20px;top:87.04px;width:74.00px;height:7.34px;line-height:8.34px;text-align:right;">$0.00</div>
<div class="c" style="left:575.20px;top:87.04px;width:60.20px;height:7.34px;line-height:8.34px;text-align:right;">$0.00</div>
<div class="c" style="left:637.40px;top:87.04px;width:35.20px;height:7.34px;line-height:8.34px;text-align:right;">$13.90</div>
<div class="tri" style="left:13.50px;top:94.68px"></div>
<div class="c" style="left:15.20px;top:94.38px;width:68.70px;height:7.33px;line-height:8.33px;margin-left:-1px;">9</div>
<div class="c" style="left:85.30px;top:94.38px;width:75.30px;height:7.33px;line-height:8.33px;text-align:right;">1</div>
<div class="c" style="left:163.80px;top:94.38px;width:84.60px;height:7.33px;line-height:8.33px;">Moveable Bedside Table</div>
<div class="c" style="left:251.00px;top:94.38px;width:70.00px;height:7.33px;line-height:8.33px;">SHOPEE260121KX42K64H</div>
<div class="c" style="left:322.40px;top:94.38px;width:73.00px;height:7.33px;line-height:8.33px;text-align:right;">$33.08</div>
<div class="c" style="left:397.40px;top:94.38px;width:51.10px;height:7.33px;line-height:8.33px;text-align:right;">$33.08</div>
<div class="c" style="left:450.50px;top:94.38px;width:46.70px;height:7.33px;line-height:8.33px;text-align:right;">$1.99</div>
<div class="c" style="left:499.20px;top:94.38px;width:74.00px;height:7.33px;line-height:8.33px;text-align:right;">-$7.99</div>
<div class="c" style="left:575.20px;top:94.38px;width:60.20px;height:7.33px;line-height:8.33px;text-align:right;">$0.00</div>
<div class="c" style="left:637.40px;top:94.38px;width:35.20px;height:7.33px;line-height:8.33px;text-align:right;">$27.08</div>
<div class="tri" style="left:13.50px;top:102.01px"></div>
<div class="c" style="left:85.30px;top:101.71px;width:75.30px;height:7.34px;line-height:8.34px;text-align:right;">2</div>
<div class="c" style="left:163.80px;top:101.71px;width:84.60px;height:7.34px;line-height:8.34px;">Vardera Mug</div>
<div class="c" style="left:322.40px;top:101.71px;width:73.00px;height:7.34px;line-height:8.34px;text-align:right;">$4.90</div>
<div class="c" style="left:15.20px;top:109.05px;width:68.70px;height:7.33px;line-height:8.33px;margin-left:-1px;">10</div>
<div class="c" style="left:85.30px;top:109.05px;width:75.30px;height:7.33px;line-height:8.33px;text-align:right;">2</div>
<div class="c" style="left:163.80px;top:109.05px;width:84.60px;height:7.33px;line-height:8.33px;">Oftast Plate</div>
<div class="c" style="left:251.00px;top:109.05px;width:70.00px;height:7.33px;line-height:8.33px;">IKEA TAMPINES#505165</div>
<div class="c" style="left:322.40px;top:109.05px;width:73.00px;height:7.33px;line-height:8.33px;text-align:right;">$0.90</div>
<div class="c" style="left:397.40px;top:109.05px;width:51.10px;height:7.33px;line-height:8.33px;text-align:right;">$90.60</div>
<div class="c" style="left:85.30px;top:116.38px;width:75.30px;height:7.34px;line-height:8.34px;text-align:right;">1</div>
<div class="c" style="left:163.80px;top:116.38px;width:84.60px;height:7.34px;line-height:8.34px;">Sundso Table</div>
<div class="c" style="left:322.40px;top:116.38px;width:73.00px;height:7.34px;line-height:8.34px;text-align:right;">$79.00</div>
<div class="c" style="left:450.50px;top:116.38px;width:46.70px;height:7.34px;line-height:8.34px;text-align:right;">$0.00</div>
<div class="c" style="left:499.20px;top:116.38px;width:74.00px;height:7.34px;line-height:8.34px;text-align:right;">$0.00</div>
<div class="c" style="left:575.20px;top:116.38px;width:60.20px;height:7.34px;line-height:8.34px;text-align:right;">$7.48</div>
<div class="c" style="left:637.40px;top:116.38px;width:35.20px;height:7.34px;line-height:8.34px;text-align:right;">$90.60</div>
<div class="tri" style="left:13.50px;top:124.02px"></div>
<div class="c" style="left:15.20px;top:123.72px;width:68.70px;height:7.33px;line-height:8.33px;margin-left:-1px;">11</div>
<div class="c" style="left:85.30px;top:123.72px;width:75.30px;height:7.33px;line-height:8.33px;text-align:right;">1</div>
<div class="c" style="left:163.80px;top:123.72px;width:84.60px;height:7.33px;line-height:8.33px;">JBL Speaker</div>
<div class="c" style="left:251.00px;top:123.72px;width:70.00px;height:7.33px;line-height:8.33px;">SHOPEE260120HEQ5AS</div>
<div class="c" style="left:322.40px;top:123.72px;width:73.00px;height:7.33px;line-height:8.33px;text-align:right;">$21.55</div>
<div class="c" style="left:397.40px;top:123.72px;width:51.10px;height:7.33px;line-height:8.33px;text-align:right;">$21.55</div>
<div class="c" style="left:450.50px;top:123.72px;width:46.70px;height:7.33px;line-height:8.33px;text-align:right;">$1.99</div>
<div class="c" style="left:499.20px;top:123.72px;width:74.00px;height:7.33px;line-height:8.33px;text-align:right;">-$0.19</div>
<div class="c" style="left:575.20px;top:123.72px;width:60.20px;height:7.33px;line-height:8.33px;text-align:right;">$0.00</div>
<div class="c" style="left:637.40px;top:123.72px;width:35.20px;height:7.33px;line-height:8.33px;text-align:right;">$21.55</div>
<div class="tri" style="left:13.50px;top:131.35px"></div>
<div class="c" style="left:15.20px;top:131.05px;width:68.70px;height:7.34px;line-height:8.34px;margin-left:-1px;">12</div>
<div class="c" style="left:85.30px;top:131.05px;width:75.30px;height:7.34px;line-height:8.34px;text-align:right;">2</div>
<div class="c" style="left:163.80px;top:131.05px;width:84.60px;height:7.34px;line-height:8.34px;">Camera Printing Paper60 Sheets</div>
<div class="c" style="left:251.00px;top:131.05px;width:70.00px;height:7.34px;line-height:8.34px;">SHOPEE260204TN4TVD</div>
<div class="c" style="left:322.40px;top:131.05px;width:73.00px;height:7.34px;line-height:8.34px;text-align:right;">$47.89</div>
<div class="c" style="left:397.40px;top:131.05px;width:51.10px;height:7.34px;line-height:8.34px;text-align:right;">$95.78</div>
<div class="c" style="left:450.50px;top:131.05px;width:46.70px;height:7.34px;line-height:8.34px;text-align:right;">$1.99</div>
<div class="c" style="left:499.20px;top:131.05px;width:74.00px;height:7.34px;line-height:8.34px;text-align:right;">-$10.00</div>
<div class="c" style="left:575.20px;top:131.05px;width:60.20px;height:7.34px;line-height:8.34px;text-align:right;">$0.00</div>
<div class="c" style="left:637.40px;top:131.05px;width:35.20px;height:7.34px;line-height:8.34px;text-align:right;">$87.77</div>
<div class="tri" style="left:13.50px;top:138.69px"></div>
<div class="c" style="left:15.20px;top:138.39px;width:68.70px;height:7.33px;line-height:8.33px;margin-left:-1px;">13</div>
<div class="c" style="left:85.30px;top:138.39px;width:75.30px;height:7.33px;line-height:8.33px;text-align:right;">2</div>
<div class="c" style="left:163.80px;top:138.39px;width:84.60px;height:7.33px;line-height:8.33px;">Camera Printing Paper40 Sheets</div>
<div class="c" style="left:251.00px;top:138.39px;width:70.00px;height:7.33px;line-height:8.33px;">SHOPEE260212HRJ0W3I</div>
<div class="c" style="left:322.40px;top:138.39px;width:73.00px;height:7.33px;line-height:8.33px;text-align:right;">$36.90</div>
<div class="c" style="left:397.40px;top:138.39px;width:51.10px;height:7.33px;line-height:8.33px;text-align:right;">$73.80</div>
<div class="c" style="left:450.50px;top:138.39px;width:46.70px;height:7.33px;line-height:8.33px;text-align:right;">$1.99</div>
<div class="c" style="left:499.20px;top:138.39px;width:74.00px;height:7.33px;line-height:8.33px;text-align:right;">-$11.99</div>
<div class="c" style="left:575.20px;top:138.39px;width:60.20px;height:7.33px;line-height:8.33px;text-align:right;">$0.00</div>
<div class="c" style="left:637.40px;top:138.39px;width:35.20px;height:7.33px;line-height:8.33px;text-align:right;">$63.80</div>
<div class="tri" style="left:13.50px;top:146.02px"></div>
<div class="c" style="left:85.30px;top:145.72px;width:75.30px;height:7.34px;line-height:8.34px;text-align:right;">2</div>
<div class="c" style="left:163.80px;top:145.72px;width:84.60px;height:7.34px;line-height:8.34px;">Sandwich</div>
<div class="c" style="left:251.00px;top:145.72px;width:70.00px;height:7.34px;line-height:8.34px;">CHEERS TANAH MERAH</div>
<div class="c" style="left:322.40px;top:145.72px;width:73.00px;height:7.34px;line-height:8.34px;text-align:right;">$3.80</div>
<div class="c" style="left:15.20px;top:153.06px;width:68.70px;height:7.33px;line-height:8.33px;margin-left:-1px;">14</div>
<div class="c" style="left:85.30px;top:153.06px;width:75.30px;height:7.33px;line-height:8.33px;text-align:right;">1</div>
<div class="c" style="left:163.80px;top:153.06px;width:84.60px;height:7.33px;line-height:8.33px;">Plastic bag</div>
<div class="c" style="left:322.40px;top:153.06px;width:73.00px;height:7.33px;line-height:8.33px;text-align:right;">$0.05</div>
<div class="c" style="left:397.40px;top:153.06px;width:51.10px;height:7.33px;line-height:8.33px;text-align:right;">$7.65</div>
<div class="c" style="left:450.50px;top:153.06px;width:46.70px;height:7.33px;line-height:8.33px;text-align:right;">$0.00</div>
<div class="c" style="left:499.20px;top:153.06px;width:74.00px;height:7.33px;line-height:8.33px;text-align:right;">$0.00</div>
<div class="c" style="left:575.20px;top:153.06px;width:60.20px;height:7.33px;line-height:8.33px;text-align:right;">$0.63</div>
<div class="c" style="left:637.40px;top:153.06px;width:35.20px;height:7.33px;line-height:8.33px;text-align:right;">$7.65</div>
<div class="tri" style="left:13.50px;top:160.69px"></div>
<div class="c" style="left:15.20px;top:160.39px;width:68.70px;height:7.34px;line-height:8.34px;margin-left:-1px;">15</div>
<div class="c" style="left:85.30px;top:160.39px;width:75.30px;height:7.34px;line-height:8.34px;text-align:right;">1</div>
<div class="c" style="left:163.80px;top:160.39px;width:84.60px;height:7.34px;line-height:8.34px;">Sandwich</div>
<div class="c" style="left:251.00px;top:160.39px;width:70.00px;height:7.34px;line-height:8.34px;">CHEERS TANAH MERAH</div>
<div class="c" style="left:322.40px;top:160.39px;width:73.00px;height:7.34px;line-height:8.34px;text-align:right;">$3.70</div>
<div class="c" style="left:397.40px;top:160.39px;width:51.10px;height:7.34px;line-height:8.34px;text-align:right;">$3.70</div>
<div class="c" style="left:450.50px;top:160.39px;width:46.70px;height:7.34px;line-height:8.34px;text-align:right;">$0.00</div>
<div class="c" style="left:499.20px;top:160.39px;width:74.00px;height:7.34px;line-height:8.34px;text-align:right;">$0.00</div>
<div class="c" style="left:575.20px;top:160.39px;width:60.20px;height:7.34px;line-height:8.34px;text-align:right;">$0.31</div>
<div class="c" style="left:637.40px;top:160.39px;width:35.20px;height:7.34px;line-height:8.34px;text-align:right;">$3.70</div>
<div class="c" style="left:576.40px;top:175.06px;width:59.60px;height:7.34px;line-height:8.34px;">TOTAL</div>
<div class="c" style="left:637.40px;top:175.06px;width:35.20px;height:7.34px;line-height:8.34px;text-align:right;">$517.84</div>
<div class="tri" style="left:636.90px;top:175.36px"></div>
<div class="t2" style="left:0;top:0">
<div class="ti" style="left:14.00px;top:189.20px;width:621.40px;height:9.80px;line-height:10.80px;text-align:center;">MISC</div>
<div class="h" style="left:14.00px;top:199.00px;width:69.30px;height:8.30px;line-height:9.30px;text-align:center;padding-top:1px;">ITEM</div>
<div class="c" style="left:86.50px;top:199.00px;width:74.70px;height:8.30px;line-height:9.30px;padding-top:1px;">QTY</div>
<div class="h" style="left:163.80px;top:199.00px;width:84.60px;height:8.30px;line-height:9.30px;padding-top:1px;">DESCRIPTION</div>
<div class="h" style="left:251.00px;top:199.00px;width:70.00px;height:8.30px;line-height:9.30px;padding-top:1px;">LOCATION</div>
<div class="h" style="left:323.60px;top:199.00px;width:72.40px;height:8.30px;line-height:9.30px;padding-top:1px;">COST/UNIT</div>
<div class="h" style="left:398.60px;top:199.00px;width:50.50px;height:8.30px;line-height:9.30px;padding-top:1px;">EST. TOTAL</div>
<div class="h" style="left:451.70px;top:199.00px;width:46.10px;height:8.30px;line-height:9.30px;padding-top:1px;">DISCOUNT</div>
<div class="h" style="left:576.40px;top:199.00px;width:59.60px;height:8.30px;line-height:9.30px;padding-top:1px;">TOTAL</div>
<div class="c" style="left:500.40px;top:199.00px;width:73.40px;height:8.30px;line-height:9.30px;padding-top:.6px;">SALES TAX (Inclusive)</div>
<div class="c" style="left:85.30px;top:207.30px;width:75.30px;height:8.07px;line-height:9.07px;text-align:right;">196</div>
<div class="c" style="left:163.80px;top:207.30px;width:84.60px;height:8.07px;line-height:9.07px;">Script Printing</div>
<div class="c" style="left:322.40px;top:207.30px;width:73.00px;height:8.07px;line-height:9.07px;text-align:right;">$0.15</div>
<div class="c" style="left:85.30px;top:215.37px;width:75.30px;height:8.07px;line-height:9.07px;text-align:right;">9</div>
<div class="c" style="left:163.80px;top:215.37px;width:84.60px;height:8.07px;line-height:9.07px;">Black File</div>
<div class="c" style="left:322.40px;top:215.37px;width:73.00px;height:8.07px;line-height:9.07px;text-align:right;">$1.00</div>
<div class="tri" style="left:13.50px;top:223.74px"></div>
<div class="c" style="left:15.20px;top:223.44px;width:68.70px;height:8.07px;line-height:9.07px;margin-left:-1px;">2</div>
<div class="c" style="left:85.30px;top:223.44px;width:75.30px;height:8.07px;line-height:9.07px;text-align:right;">207</div>
<div class="c" style="left:163.80px;top:223.44px;width:84.60px;height:8.07px;line-height:9.07px;">Script Printing</div>
<div class="c" style="left:322.40px;top:223.44px;width:73.00px;height:8.07px;line-height:9.07px;text-align:right;">$0.15</div>
<div class="c" style="left:397.40px;top:223.44px;width:51.10px;height:8.07px;line-height:9.07px;text-align:right;">$31.05</div>
<div class="c" style="left:450.50px;top:223.44px;width:46.70px;height:8.07px;line-height:9.07px;text-align:right;">$0.00</div>
<div class="c" style="left:499.20px;top:223.44px;width:74.00px;height:8.07px;line-height:9.07px;text-align:right;">$2.56</div>
<div class="c" style="left:575.20px;top:223.44px;width:60.20px;height:8.07px;line-height:9.07px;text-align:right;">$31.05</div>
<div class="tri" style="left:13.50px;top:231.81px"></div>
<div class="c" style="left:85.30px;top:231.51px;width:75.30px;height:8.07px;line-height:9.07px;text-align:right;">1</div>
<div class="c" style="left:163.80px;top:231.51px;width:84.60px;height:8.07px;line-height:9.07px;">File Folder</div>
<div class="c" style="left:322.40px;top:231.51px;width:73.00px;height:8.07px;line-height:9.07px;text-align:right;">$3.05</div>
<div class="c" style="left:85.30px;top:239.58px;width:75.30px;height:8.07px;line-height:9.07px;text-align:right;">2</div>
<div class="c" style="left:163.80px;top:239.58px;width:84.60px;height:8.07px;line-height:9.07px;">Paint, Burnt Sienna</div>
<div class="c" style="left:322.40px;top:239.58px;width:73.00px;height:8.07px;line-height:9.07px;text-align:right;">$2.15</div>
<div class="c" style="left:85.30px;top:247.65px;width:75.30px;height:8.07px;line-height:9.07px;text-align:right;">2</div>
<div class="c" style="left:163.80px;top:247.65px;width:84.60px;height:8.07px;line-height:9.07px;">Paint, Black</div>
<div class="c" style="left:322.40px;top:247.65px;width:73.00px;height:8.07px;line-height:9.07px;text-align:right;">$2.15</div>
<div class="c" style="left:85.30px;top:255.72px;width:75.30px;height:8.07px;line-height:9.07px;text-align:right;">2</div>
<div class="c" style="left:163.80px;top:255.72px;width:84.60px;height:8.07px;line-height:9.07px;">Paint, White</div>
<div class="c" style="left:322.40px;top:255.72px;width:73.00px;height:8.07px;line-height:9.07px;text-align:right;">$2.15</div>
<div class="c" style="left:15.20px;top:263.79px;width:68.70px;height:8.07px;line-height:9.07px;margin-left:-1px;">3</div>
<div class="c" style="left:85.30px;top:263.79px;width:75.30px;height:8.07px;line-height:9.07px;text-align:right;">1</div>
<div class="c" style="left:163.80px;top:263.79px;width:84.60px;height:8.07px;line-height:9.07px;">Paint, Yellow</div>
<div class="c" style="left:322.40px;top:263.79px;width:73.00px;height:8.07px;line-height:9.07px;text-align:right;">$2.15</div>
<div class="c" style="left:397.40px;top:263.79px;width:51.10px;height:8.07px;line-height:9.07px;text-align:right;">$18.10</div>
<div class="c" style="left:450.50px;top:263.79px;width:46.70px;height:8.07px;line-height:9.07px;text-align:right;">-$3.62</div>
<div class="c" style="left:499.20px;top:263.79px;width:74.00px;height:8.07px;line-height:9.07px;text-align:right;">$0.00</div>
<div class="c" style="left:575.20px;top:263.79px;width:60.20px;height:8.07px;line-height:9.07px;text-align:right;">$14.48</div>
<div class="tri" style="left:13.50px;top:272.16px"></div>
<div class="c" style="left:15.20px;top:271.86px;width:68.70px;height:8.07px;line-height:9.07px;margin-left:-1px;">4</div>
<div class="c" style="left:85.30px;top:271.86px;width:75.30px;height:8.07px;line-height:9.07px;text-align:right;">3</div>
<div class="c" style="left:163.80px;top:271.86px;width:84.60px;height:8.07px;line-height:9.07px;">Masking Tape</div>
<div class="c" style="left:322.40px;top:271.86px;width:73.00px;height:8.07px;line-height:9.07px;text-align:right;">$2.50</div>
<div class="c" style="left:397.40px;top:271.86px;width:51.10px;height:8.07px;line-height:9.07px;text-align:right;">$7.50</div>
<div class="c" style="left:450.50px;top:271.86px;width:46.70px;height:8.07px;line-height:9.07px;text-align:right;">$0.00</div>
<div class="c" style="left:499.20px;top:271.86px;width:74.00px;height:8.07px;line-height:9.07px;text-align:right;">$0.00</div>
<div class="c" style="left:575.20px;top:271.86px;width:60.20px;height:8.07px;line-height:9.07px;text-align:right;">$7.50</div>
<div class="tri" style="left:13.50px;top:280.23px"></div>
<div class="c" style="left:15.20px;top:279.93px;width:68.70px;height:8.07px;line-height:9.07px;margin-left:-1px;">5</div>
<div class="c" style="left:85.30px;top:279.93px;width:75.30px;height:8.07px;line-height:9.07px;text-align:right;">3</div>
<div class="c" style="left:163.80px;top:279.93px;width:84.60px;height:8.07px;line-height:9.07px;">Masking Tape</div>
<div class="c" style="left:322.40px;top:279.93px;width:73.00px;height:8.07px;line-height:9.07px;text-align:right;">$2.50</div>
<div class="c" style="left:397.40px;top:279.93px;width:51.10px;height:8.07px;line-height:9.07px;text-align:right;">$7.50</div>
<div class="c" style="left:450.50px;top:279.93px;width:46.70px;height:8.07px;line-height:9.07px;text-align:right;">$0.00</div>
<div class="c" style="left:499.20px;top:279.93px;width:74.00px;height:8.07px;line-height:9.07px;text-align:right;">$0.00</div>
<div class="c" style="left:575.20px;top:279.93px;width:60.20px;height:8.07px;line-height:9.07px;text-align:right;">$7.50</div>
<div class="tri" style="left:13.50px;top:288.30px"></div>
<div class="c" style="left:85.30px;top:288.00px;width:75.30px;height:7.50px;line-height:8.50px;text-align:right;">1</div>
<div class="c" style="left:163.80px;top:288.00px;width:84.60px;height:7.50px;line-height:8.50px;">Spraypaint, Silver</div>
<div class="c" style="left:322.40px;top:288.00px;width:73.00px;height:7.50px;line-height:8.50px;text-align:right;">$7.19</div>
<div class="c" style="left:85.30px;top:295.50px;width:75.30px;height:7.50px;line-height:8.50px;text-align:right;">1</div>
<div class="c" style="left:163.80px;top:295.50px;width:84.60px;height:7.50px;line-height:8.50px;">Spraypaint, Flash Gold</div>
<div class="c" style="left:322.40px;top:295.50px;width:73.00px;height:7.50px;line-height:8.50px;text-align:right;">$8.00</div>
<div class="c" style="left:85.30px;top:303.00px;width:75.30px;height:7.50px;line-height:8.50px;text-align:right;">1</div>
<div class="c" style="left:163.80px;top:303.00px;width:84.60px;height:7.50px;line-height:8.50px;">Spraypaint, Elephant Grey</div>
<div class="c" style="left:322.40px;top:303.00px;width:73.00px;height:7.50px;line-height:8.50px;text-align:right;">$7.19</div>
<div class="c" style="left:85.30px;top:310.50px;width:75.30px;height:7.50px;line-height:8.50px;text-align:right;">1</div>
<div class="c" style="left:163.80px;top:310.50px;width:84.60px;height:7.50px;line-height:8.50px;">Spraypaint, Copper</div>
<div class="c" style="left:322.40px;top:310.50px;width:73.00px;height:7.50px;line-height:8.50px;text-align:right;">$5.50</div>
<div class="c" style="left:85.30px;top:318.00px;width:75.30px;height:7.50px;line-height:8.50px;text-align:right;">3</div>
<div class="c" style="left:163.80px;top:318.00px;width:84.60px;height:7.50px;line-height:8.50px;">UHU All Purpose Glue</div>
<div class="c" style="left:322.40px;top:318.00px;width:73.00px;height:7.50px;line-height:8.50px;text-align:right;">$7.85</div>
<div class="c" style="left:15.20px;top:325.50px;width:68.70px;height:7.50px;line-height:8.50px;margin-left:-1px;">6</div>
<div class="c" style="left:85.30px;top:325.50px;width:75.30px;height:7.50px;line-height:8.50px;text-align:right;">2</div>
<div class="c" style="left:163.80px;top:325.50px;width:84.60px;height:7.50px;line-height:8.50px;">Poly Styrofoam Glue</div>
<div class="c" style="left:322.40px;top:325.50px;width:73.00px;height:7.50px;line-height:8.50px;text-align:right;">$1.80</div>
<div class="c" style="left:397.40px;top:325.50px;width:51.10px;height:7.50px;line-height:8.50px;text-align:right;">$55.03</div>
<div class="c" style="left:450.50px;top:325.50px;width:46.70px;height:7.50px;line-height:8.50px;text-align:right;">-$7.85</div>
<div class="c" style="left:499.20px;top:325.50px;width:74.00px;height:7.50px;line-height:8.50px;text-align:right;">$3.88</div>
<div class="c" style="left:575.20px;top:325.50px;width:60.20px;height:7.50px;line-height:8.50px;text-align:right;">$47.18</div>
<div class="tri" style="left:13.50px;top:333.30px"></div>
<div class="c" style="left:15.20px;top:333.00px;width:68.70px;height:7.50px;line-height:8.50px;margin-left:-1px;">7</div>
<div class="c" style="left:85.30px;top:333.00px;width:75.30px;height:7.50px;line-height:8.50px;text-align:right;">4</div>
<div class="c" style="left:163.80px;top:333.00px;width:84.60px;height:7.50px;line-height:8.50px;">Coloured Tissue Paper, Brown</div>
<div class="c" style="left:322.40px;top:333.00px;width:73.00px;height:7.50px;line-height:8.50px;text-align:right;">$3.50</div>
<div class="c" style="left:397.40px;top:333.00px;width:51.10px;height:7.50px;line-height:8.50px;text-align:right;">$14.00</div>
<div class="c" style="left:450.50px;top:333.00px;width:46.70px;height:7.50px;line-height:8.50px;text-align:right;">-$3.52</div>
<div class="c" style="left:499.20px;top:333.00px;width:74.00px;height:7.50px;line-height:8.50px;text-align:right;">$0.87</div>
<div class="c" style="left:575.20px;top:333.00px;width:60.20px;height:7.50px;line-height:8.50px;text-align:right;">$10.48</div>
<div class="tri" style="left:13.50px;top:340.80px"></div>
<div class="c" style="left:85.30px;top:340.50px;width:75.30px;height:7.50px;line-height:8.50px;text-align:right;">1</div>
<div class="c" style="left:163.80px;top:340.50px;width:84.60px;height:7.50px;line-height:8.50px;">Spraypaint, Brown</div>
<div class="c" style="left:322.40px;top:340.50px;width:73.00px;height:7.50px;line-height:8.50px;text-align:right;">$7.19</div>
<div class="c" style="left:85.30px;top:348.00px;width:75.30px;height:7.50px;line-height:8.50px;text-align:right;">1</div>
<div class="c" style="left:163.80px;top:348.00px;width:84.60px;height:7.50px;line-height:8.50px;">Spraypaint, Flash Gold</div>
<div class="c" style="left:322.40px;top:348.00px;width:73.00px;height:7.50px;line-height:8.50px;text-align:right;">$8.00</div>
<div class="c" style="left:85.30px;top:355.50px;width:75.30px;height:7.50px;line-height:8.50px;text-align:right;">1</div>
<div class="c" style="left:163.80px;top:355.50px;width:84.60px;height:7.50px;line-height:8.50px;">Spraypaint, Antirust Brown</div>
<div class="c" style="left:322.40px;top:355.50px;width:73.00px;height:7.50px;line-height:8.50px;text-align:right;">$7.19</div>
<div class="c" style="left:85.30px;top:363.00px;width:75.30px;height:7.50px;line-height:8.50px;text-align:right;">1</div>
<div class="c" style="left:163.80px;top:363.00px;width:84.60px;height:7.50px;line-height:8.50px;">Spraypaint, Elephant Grey</div>
<div class="c" style="left:322.40px;top:363.00px;width:73.00px;height:7.50px;line-height:8.50px;text-align:right;">$7.19</div>
<div class="c" style="left:15.20px;top:370.50px;width:68.70px;height:7.50px;line-height:8.50px;margin-left:-1px;">8</div>
<div class="c" style="left:85.30px;top:370.50px;width:75.30px;height:7.50px;line-height:8.50px;text-align:right;">1</div>
<div class="c" style="left:163.80px;top:370.50px;width:84.60px;height:7.50px;line-height:8.50px;">Shoe Glue</div>
<div class="c" style="left:322.40px;top:370.50px;width:73.00px;height:7.50px;line-height:8.50px;text-align:right;">$2.11</div>
<div class="c" style="left:397.40px;top:370.50px;width:51.10px;height:7.50px;line-height:8.50px;text-align:right;">$31.68</div>
<div class="c" style="left:450.50px;top:370.50px;width:46.70px;height:7.50px;line-height:8.50px;text-align:right;">$0.00</div>
<div class="c" style="left:499.20px;top:370.50px;width:74.00px;height:7.50px;line-height:8.50px;text-align:right;">$2.60</div>
<div class="c" style="left:575.20px;top:370.50px;width:60.20px;height:7.50px;line-height:8.50px;text-align:right;">$31.68</div>
<div class="tri" style="left:13.50px;top:378.30px"></div>
<div class="c" style="left:15.20px;top:378.00px;width:68.70px;height:7.50px;line-height:8.50px;margin-left:-1px;">9</div>
<div class="c" style="left:85.30px;top:378.00px;width:75.30px;height:7.50px;line-height:8.50px;text-align:right;">190</div>
<div class="c" style="left:163.80px;top:378.00px;width:84.60px;height:7.50px;line-height:8.50px;">Script Printing</div>
<div class="c" style="left:322.40px;top:378.00px;width:73.00px;height:7.50px;line-height:8.50px;text-align:right;">$0.15</div>
<div class="c" style="left:397.40px;top:378.00px;width:51.10px;height:7.50px;line-height:8.50px;text-align:right;">$29.70</div>
<div class="c" style="left:450.50px;top:378.00px;width:46.70px;height:7.50px;line-height:8.50px;text-align:right;">$0.00</div>
<div class="c" style="left:499.20px;top:378.00px;width:74.00px;height:7.50px;line-height:8.50px;text-align:right;">$2.45</div>
<div class="c" style="left:575.20px;top:378.00px;width:60.20px;height:7.50px;line-height:8.50px;text-align:right;">$29.70</div>
<div class="tri" style="left:13.50px;top:385.80px"></div>
<div class="c" style="left:15.20px;top:385.50px;width:68.70px;height:7.50px;line-height:8.50px;margin-left:-1px;">10</div>
<div class="c" style="left:85.30px;top:385.50px;width:75.30px;height:7.50px;line-height:8.50px;text-align:right;">1</div>
<div class="c" style="left:163.80px;top:385.50px;width:84.60px;height:7.50px;line-height:8.50px;">Plasters</div>
<div class="c" style="left:322.40px;top:385.50px;width:73.00px;height:7.50px;line-height:8.50px;text-align:right;">$3.60</div>
<div class="c" style="left:397.40px;top:385.50px;width:51.10px;height:7.50px;line-height:8.50px;text-align:right;">$3.60</div>
<div class="c" style="left:450.50px;top:385.50px;width:46.70px;height:7.50px;line-height:8.50px;text-align:right;">$0.00</div>
<div class="c" style="left:499.20px;top:385.50px;width:74.00px;height:7.50px;line-height:8.50px;text-align:right;">$0.30</div>
<div class="c" style="left:575.20px;top:385.50px;width:60.20px;height:7.50px;line-height:8.50px;text-align:right;">$3.60</div>
<div class="tri" style="left:13.50px;top:207.60px"></div>
<div class="c" style="left:15.20px;top:207.30px;width:68.70px;height:16.14px;line-height:17.14px;margin-left:-1px;">1</div>
<div class="c" style="left:251.00px;top:207.30px;width:70.00px;height:16.14px;line-height:17.14px;">Pacific Bookstore Woodlands</div>
<div class="c" style="left:397.40px;top:207.30px;width:51.10px;height:16.14px;line-height:17.14px;text-align:right;">$38.70</div>
<div class="c" style="left:450.50px;top:207.30px;width:46.70px;height:16.14px;line-height:17.14px;text-align:right;">$0.00</div>
<div class="c" style="left:499.20px;top:207.30px;width:74.00px;height:16.14px;line-height:17.14px;text-align:right;">$3.20</div>
<div class="c" style="left:575.20px;top:207.30px;width:60.20px;height:16.14px;line-height:17.14px;text-align:right;">$38.70</div>
<div class="c" style="left:251.00px;top:223.44px;width:70.00px;height:8.07px;line-height:9.07px;">Pacific Bookstore Woodlands</div>
<div class="c" style="left:251.00px;top:231.51px;width:70.00px;height:40.35px;line-height:41.35px;">Popular Bookstore Tampines</div>
<div class="c" style="left:251.00px;top:271.86px;width:70.00px;height:8.07px;line-height:9.07px;">Pacific Bookstore Woodlands</div>
<div class="c" style="left:251.00px;top:279.93px;width:70.00px;height:8.07px;line-height:9.07px;">Pacific Bookstore Woodlands</div>
<div class="c" style="left:251.00px;top:288.00px;width:70.00px;height:45.00px;line-height:46.00px;">Art Friend Plaza Singapura</div>
<div class="c" style="left:251.00px;top:333.00px;width:70.00px;height:7.50px;line-height:8.50px;">Spotlight Plaza Singapura</div>
<div class="c" style="left:251.00px;top:340.50px;width:70.00px;height:37.50px;line-height:38.50px;">Art Friend Plaza Singapura</div>
<div class="c" style="left:251.00px;top:378.00px;width:70.00px;height:7.50px;line-height:8.50px;">Pacific Bookstore Woodlands</div>
<div class="c" style="left:251.00px;top:385.50px;width:70.00px;height:7.50px;line-height:8.50px;">7/11 at Republic Polytechnic</div>
<div class="c" style="left:500.40px;top:400.50px;width:73.40px;height:7.50px;line-height:8.50px;">TOTAL</div>
<div class="c" style="left:575.20px;top:400.50px;width:60.20px;height:7.50px;line-height:8.50px;text-align:right;">$221.87</div>
</div>
<div style="left:1266.00px;top:0.00px;width:14.00px;height:407.00px;background:#f3f3f3;"></div>
<svg style="left:1271px;top:9px" width="9" height="7" viewBox="0 0 9 7"><path d="M0 6.5L5.5 0L11 6.5Z" fill="#6b6b6b"/></svg>
<div style="left:1272.40px;top:37.60px;width:7.00px;height:19.80px;background:#747474;border-radius:3.5px;"></div>
<svg style="left:1271px;top:397px" width="9" height="7" viewBox="0 0 9 7"><path d="M0 0L5.5 6.5L11 0Z" fill="#6b6b6b"/></svg>
</div>
</div>
<div id="sheetbar" class="abs">
<div class="L">
<svg style="left:23.50px;top:11.30px;" width="7" height="9.5" viewBox="0 0 7 9.5"><path d="M5.800 0.600L1 4.700L5.800 8.800" fill="none" stroke="#8f8f8f" stroke-width="1.150" stroke-linecap="round" stroke-linejoin="round"/></svg>
<svg style="left:56.00px;top:11.30px;" width="7" height="9.5" viewBox="0 0 7 9.5"><path d="M1 0.600L5.800 4.700L1 8.800" fill="none" stroke="#8f8f8f" stroke-width="1.150" stroke-linecap="round" stroke-linejoin="round"/></svg>
<div style="left:111.20px;top:0.00px;width:58.00px;height:27.00px;background:#fff;border-radius:0 0 5px 5px;box-shadow:0 0 2px rgba(0,0,0,.18)"></div>
<div class="t" style="left:119.28px;top:7px;font-size:14.3px;letter-spacing:-0.779px;color:#222;">Sheet1</div>
<div style="left:119.50px;top:23.30px;width:41.00px;height:1.90px;background:#107c41;border-radius:1px"></div>
<div class="t" style="left:185.48px;top:10px;font-size:14.3px;letter-spacing:-0.419px;color:#444;">Sheet2</div>
<div style="left:240.80px;top:8.00px;width:1.00px;height:16.50px;background:#dcdcdc"></div>
<svg style="left:284.00px;top:10.50px;" width="11" height="11" viewBox="0 0 11 11"><path d="M5.500 0.300v10.400M0.300 5.500h10.400" stroke="#4a4a4a" stroke-width="1.150" stroke-linecap="round"/></svg>
<svg style="left:772.50px;top:12.00px;" width="3" height="9.5" viewBox="0 0 3 9.5"><circle cx="1.400" cy="1.200" r="1" fill="#4a4a4a"/><circle cx="1.400" cy="4.700" r="1" fill="#4a4a4a"/><circle cx="1.400" cy="8.200" r="1" fill="#4a4a4a"/></svg>
<svg style="left:796.00px;top:11.50px;" width="7.5" height="9" viewBox="0 0 7.5 9"><path d="M7 0.300V8.700L0.500 4.500z" fill="#6b6b6b"/></svg>
<div style="left:808.50px;top:12.00px;width:424.00px;height:7.60px;background:#717171;border-radius:4px"></div>
<svg style="left:1255.00px;top:11.50px;" width="7.5" height="9" viewBox="0 0 7.5 9"><path d="M0.500 0.300V8.700L7 4.500z" fill="#6b6b6b"/></svg>
</div>
</div>
<div id="status" class="abs">
<div class="L">
<div class="t" style="left:10.64px;top:9px;font-size:11.2px;letter-spacing:-0.864px;color:#555;">Ready</div>
<svg style="left:59.00px;top:6.80px;" width="15" height="15" viewBox="0 0 15 15"><circle cx="6.300" cy="2.300" r="1.600" fill="none" stroke="#333" stroke-width="1"/><path d="M0.700 3.300C2.500 4.600 4.300 5.200 6.300 5.200s3.800-0.600 5.600-1.900M4.500 5.300C4.700 8 4 10.500 2.200 14M8.100 5.300c-0.100 1.200 0 2.300 0.300 3.300M2.200 14l2.800-3.300" fill="none" stroke="#333" stroke-width="1.050" stroke-linecap="round" stroke-linejoin="round"/><path d="M7.500 9l6.300 5.500M13.800 9l-6.300 5.500" stroke="#333" stroke-width="1.100" stroke-linecap="round"/></svg>
<div class="t" style="left:76.94px;top:9px;font-size:11.2px;letter-spacing:-0.309px;font-weight:bold;color:#333;">Accessibility: Investigate</div>
<div style="left:987.50px;top:3.00px;width:40.00px;height:23.00px;background:#dadada"></div>
<svg style="left:1000.00px;top:7.00px;" width="14" height="13.5" viewBox="0 0 14 13.5"><rect x="0.600" y="0.600" width="12.600" height="12.200" fill="none" stroke="#3b3b3b" stroke-width="1.150"/><path d="M4.800 0.600v12.200M9 0.600v12.200M0.600 4.700h12.600M0.600 8.800h12.600" stroke="#3b3b3b" stroke-width="1.050" fill="none"/></svg>
<svg style="left:1040.00px;top:7.00px;" width="15" height="13.5" viewBox="0 0 15 13.5"><rect x="0.600" y="0.600" width="13.400" height="12.200" fill="none" stroke="#3b3b3b" stroke-width="1.150"/><rect x="3.700" y="3.300" width="7.200" height="6.900" fill="none" stroke="#3b3b3b" stroke-width="0.900"/><path d="M5.200 5.500h4.200M5.200 7.900h4.200" stroke="#3b3b3b" stroke-width="0.800"/></svg>
<svg style="left:1080.50px;top:7.00px;" width="15" height="13.5" viewBox="0 0 15 13.5"><rect x="0.600" y="0.600" width="13.400" height="12.200" fill="none" stroke="#3b3b3b" stroke-width="1.150"/><path d="M5 0.600v6.500h4.800V0.600" fill="none" stroke="#3b3b3b" stroke-width="1.050"/></svg>
<div style="left:1113.00px;top:13.20px;width:7.50px;height:1.10px;background:#4f4f4f"></div>
<div style="left:1127.00px;top:13.30px;width:98.50px;height:0.90px;background:#6a6a6a"></div>
<div style="left:1142.00px;top:8.20px;width:5.00px;height:11.00px;background:#555"></div>
<div style="left:1175.80px;top:11.50px;width:0.90px;height:4.50px;background:#6a6a6a"></div>
<svg style="left:1231.00px;top:10.00px;" width="8" height="8" viewBox="0 0 8 8"><path d="M4 0.400v7.200M0.400 4h7.200" stroke="#4f4f4f" stroke-width="1.050"/></svg>
<div class="t" style="left:1250.64px;top:9px;font-size:11.2px;letter-spacing:-0.398px;color:#555;">40%</div>
<div style="left:0.00px;top:24.70px;width:1280.00px;height:1.30px;background:#a8a8a8"></div>
</div>
</div>
</body>
</html>
